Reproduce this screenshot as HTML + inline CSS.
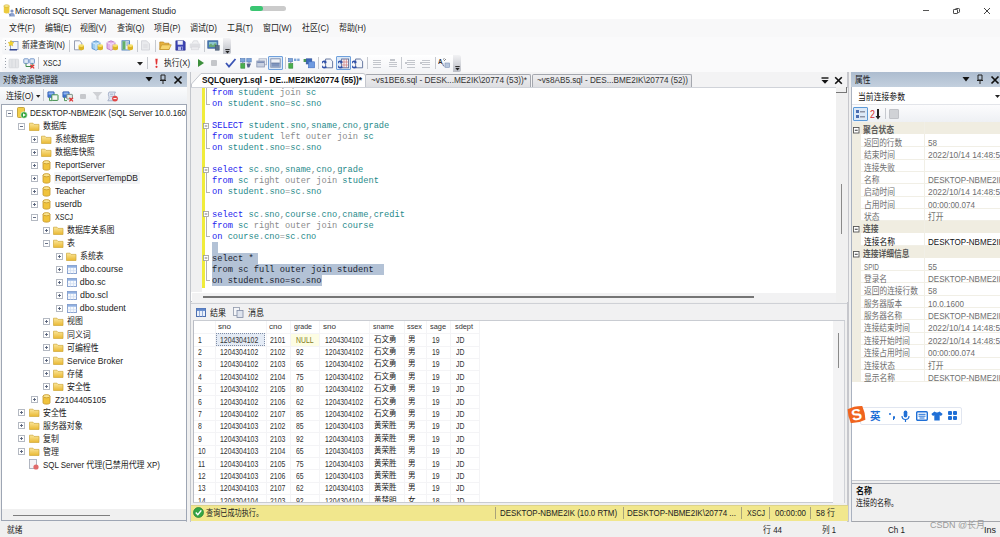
<!DOCTYPE html>
<html lang="zh"><head><meta charset="utf-8"><title>Microsoft SQL Server Management Studio</title>
<style>
*{box-sizing:border-box;margin:0;padding:0}
html,body{width:1000px;height:537px;overflow:hidden;background:#f0f0f0}
body{position:relative;font-family:"Liberation Sans","Noto Sans CJK SC",sans-serif;font-size:9px;color:#1a1a1a;line-height:1}
.a{position:absolute}
.t{position:absolute;white-space:nowrap;line-height:12px;height:12px}
.code{position:absolute;white-space:pre;font-family:"Liberation Mono","Noto Sans CJK SC",monospace;font-size:8.7px;line-height:11px;height:11px;color:#1f8a8a}
.kw{color:#2222ee}.gr{color:#8c8c8c}.bk{color:#000}
.sel{background:#b3c3d6}
</style></head><body>
<svg class="a" width="0" height="0"><defs><linearGradient id="fg" x1="0" y1="0" x2="0" y2="1"><stop offset="0" stop-color="#fbe69a"/><stop offset="1" stop-color="#e9b832"/></linearGradient></defs></svg>

<div class="a" style="left:0px;top:0px;width:1000px;height:19px;background:#fff"></div>
<svg class="a" style="left:2.5px;top:3.5px" width="13" height="13"><path d="M0.8 2V8.6Q3.5 10.4 6.4 8.6V2Z" fill="#eccb3e"/><ellipse cx="3.6" cy="2" rx="2.8" ry="1.3" fill="#f8e88a" stroke="#c9a62c" stroke-width="0.5"/><circle cx="9" cy="7" r="1.6" fill="#7d92c4"/><path d="M6 12.5Q6.4 8.8 9 8.8Q11.6 8.8 12 12.5Z" fill="#8ea3d0"/><path d="M5.6 9.6L8 11.4" stroke="#5a6a9a" stroke-width="0.8"/></svg>
<div class="t" style="left:15px;top:5px;font-size:8.8px;color:#222;transform:scaleX(0.976);transform-origin:0 50%;">Microsoft SQL Server Management Studio</div>
<div class="a" style="left:250px;top:5.7px;width:36px;height:5px;background:#cbcbcb;border-radius:3px"></div>
<div class="a" style="left:250px;top:5.7px;width:13px;height:5px;background:#3ac672;border-radius:3px"></div>
<div class="a" style="left:922.5px;top:10px;width:6.5px;height:1px;background:#555"></div>
<div class="a" style="left:953px;top:9.3px;width:5.2px;height:5.2px;border:1px solid #444;border-radius:1.3px;background:#fff"></div>
<div class="a" style="left:954.8px;top:7.8px;width:5.2px;height:5.2px;border:1px solid #444;border-radius:1.3px"></div>
<div class="a" style="left:953px;top:9.3px;width:5.2px;height:5.2px;border:1px solid #444;border-radius:1.3px;background:#fff"></div>
<svg class="a" style="left:983.3px;top:7px" width="8" height="8"><path d="M1 1L7 7M7 1L1 7" stroke="#444" stroke-width="1" fill="none"/></svg>
<div class="a" style="left:0px;top:19px;width:1000px;height:18px;background:#f8f8f9"></div>
<div class="t" style="left:9px;top:22px;font-size:8.8px;transform:scaleX(0.900);transform-origin:0 50%;">文件(F)</div>
<div class="t" style="left:45px;top:22px;font-size:8.8px;transform:scaleX(0.900);transform-origin:0 50%;">编辑(E)</div>
<div class="t" style="left:80px;top:22px;font-size:8.8px;transform:scaleX(0.900);transform-origin:0 50%;">视图(V)</div>
<div class="t" style="left:117px;top:22px;font-size:8.8px;transform:scaleX(0.900);transform-origin:0 50%;">查询(Q)</div>
<div class="t" style="left:154px;top:22px;font-size:8.8px;transform:scaleX(0.900);transform-origin:0 50%;">项目(P)</div>
<div class="t" style="left:190px;top:22px;font-size:8.8px;transform:scaleX(0.900);transform-origin:0 50%;">调试(D)</div>
<div class="t" style="left:227px;top:22px;font-size:8.8px;transform:scaleX(0.900);transform-origin:0 50%;">工具(T)</div>
<div class="t" style="left:263px;top:22px;font-size:8.8px;transform:scaleX(0.900);transform-origin:0 50%;">窗口(W)</div>
<div class="t" style="left:302px;top:22px;font-size:8.8px;transform:scaleX(0.900);transform-origin:0 50%;">社区(C)</div>
<div class="t" style="left:339px;top:22px;font-size:8.8px;transform:scaleX(0.900);transform-origin:0 50%;">帮助(H)</div>
<div class="a" style="left:0px;top:37px;width:1000px;height:35px;background:#fafafb"></div>
<div class="a" style="left:2px;top:38px;width:229px;height:16px;background:linear-gradient(#ffffff,#f3f4f7);border-radius:2px"></div>
<div class="a" style="left:2px;top:55px;width:459px;height:17px;background:linear-gradient(#ffffff,#f3f4f7);border-radius:2px"></div>
<div class="a" style="left:223px;top:38px;width:8px;height:16px;background:linear-gradient(#f2f2f4,#b9bcc4);border-radius:0 2px 2px 0"></div>
<div class="a" style="left:453px;top:55px;width:8px;height:17px;background:linear-gradient(#f2f2f4,#b9bcc4);border-radius:0 2px 2px 0"></div>
<div class="a" style="left:5px;top:40px;width:1px;height:1px;background:#9aa0aa"></div>
<div class="a" style="left:5px;top:43px;width:1px;height:1px;background:#9aa0aa"></div>
<div class="a" style="left:5px;top:46px;width:1px;height:1px;background:#9aa0aa"></div>
<div class="a" style="left:5px;top:49px;width:1px;height:1px;background:#9aa0aa"></div>
<div class="a" style="left:5px;top:58px;width:1px;height:1px;background:#9aa0aa"></div>
<div class="a" style="left:5px;top:61px;width:1px;height:1px;background:#9aa0aa"></div>
<div class="a" style="left:5px;top:64px;width:1px;height:1px;background:#9aa0aa"></div>
<div class="a" style="left:5px;top:67px;width:1px;height:1px;background:#9aa0aa"></div>
<svg class="a" style="left:8px;top:39.5px" width="12" height="11" viewBox="0 0 12 11"><rect x="2.5" y="1.5" width="7.5" height="8" fill="#f3f6fb" stroke="#8b9cc0" stroke-width="0.9"/><path d="M1.5 9.8H9" stroke="#2c3f8c" stroke-width="1.4"/><path d="M3 0.3L3.9 2.2L6 2.5L4.4 3.9L4.8 6L3 5L1.2 6L1.6 3.9L0 2.5L2.1 2.2Z" fill="#f2d52c" stroke="#d1ac1a" stroke-width="0.4"/></svg>
<div class="t" style="left:22px;top:39.3px;font-size:8.8px;transform:scaleX(0.907);transform-origin:0 50%;">新建查询(N)</div>
<div class="a" style="left:69px;top:40px;width:1px;height:12px;background:#c6c9cf"></div>
<svg class="a" style="left:73px;top:39.5px" width="12" height="11" viewBox="0 0 12 11"><path d="M1.5 0.8H6.5L8.8 3V9.8H1.5Z" fill="#f8f9fb" stroke="#8a93a8" stroke-width="0.9"/><path d="M5.6 5.6V9.2Q8.3 11.2 11 9.2V5.6Z" fill="#dcb526"/><ellipse cx="8.3" cy="5.6" rx="2.7" ry="1.3" fill="#f6e170"/></svg>
<svg class="a" style="left:91px;top:39.5px" width="13" height="11" viewBox="0 0 13 11"><path d="M1 2.5L5 0.8L9 2.5V8.5L5 10.2L1 8.5Z" fill="#9dcdf0" stroke="#4d86c6" stroke-width="0.8"/><path d="M1 2.5L5 4.2L9 2.5M5 4.2V10" stroke="#e9f4fc" stroke-width="0.8" fill="none"/><path d="M6.6 5.6V9.2Q9.3 11.2 12 9.2V5.6Z" fill="#dcb526"/><ellipse cx="9.3" cy="5.6" rx="2.7" ry="1.3" fill="#f6e170"/></svg>
<svg class="a" style="left:106px;top:39.5px" width="13" height="11" viewBox="0 0 13 11"><path d="M1 2.5L5 0.8L9 2.5V8.5L5 10.2L1 8.5Z" fill="#e3b4e8" stroke="#b26fc0" stroke-width="0.8"/><path d="M1 2.5L5 4.2L9 2.5M5 4.2V10" stroke="#f9ecfa" stroke-width="0.8" fill="none"/><path d="M6.6 5.6V9.2Q9.3 11.2 12 9.2V5.6Z" fill="#dcb526"/><ellipse cx="9.3" cy="5.6" rx="2.7" ry="1.3" fill="#f6e170"/></svg>
<svg class="a" style="left:121px;top:39.5px" width="13" height="11" viewBox="0 0 13 11"><rect x="1" y="0.8" width="7.5" height="9.2" fill="#e7f0f8" stroke="#4a7cb8" stroke-width="0.9"/><rect x="1.5" y="1.2" width="3" height="8.4" fill="#62b06a"/><path d="M5.3 3H8M5.3 5H8" stroke="#4a7cb8" stroke-width="0.8"/><path d="M6.6 5.6V9.2Q9.3 11.2 12 9.2V5.6Z" fill="#dcb526"/><ellipse cx="9.3" cy="5.6" rx="2.7" ry="1.3" fill="#f6e170"/></svg>
<div class="a" style="left:137px;top:40px;width:1px;height:12px;background:#c6c9cf"></div>
<svg class="a" style="left:140px;top:39.5px" width="12" height="11" viewBox="0 0 12 11"><path d="M1.5 0.8H6.5L9.5 3.8V10H1.5Z" fill="#e9eaed" stroke="#d2d4d9" stroke-width="0.9"/><path d="M3.2 5H7.6M3.2 7H7.6" stroke="#d4d6db" stroke-width="0.8"/></svg>
<div class="a" style="left:155px;top:40px;width:1px;height:12px;background:#c6c9cf"></div>
<svg class="a" style="left:159px;top:40px" width="13" height="11" viewBox="0 0 13 11"><path d="M0.8 2H4.5L5.5 3.2H10V9.5H0.8Z" fill="#e9b23e" stroke="#b98520" stroke-width="0.7"/><path d="M2.6 4.8H12.2L10 9.5H0.8Z" fill="#f7d56e" stroke="#c2922a" stroke-width="0.7"/></svg>
<svg class="a" style="left:175px;top:39.5px" width="11" height="11" viewBox="0 0 11 11"><path d="M0.8 0.8H9L10.2 2V10.2H0.8Z" fill="#3c44b4" stroke="#2a2f88" stroke-width="0.6"/><rect x="2.6" y="0.9" width="5.2" height="3.8" fill="#eceefa"/><rect x="3" y="6.6" width="5" height="3.6" fill="#b9bfe8"/><rect x="6" y="7.2" width="1.4" height="2.6" fill="#3c44b4"/></svg>
<svg class="a" style="left:189px;top:40px" width="12" height="11" viewBox="0 0 12 11"><path d="M3 3.5L4.5 0.8H8.5L9.5 3.5" fill="#f0f0f2" stroke="#d6d7db" stroke-width="0.7"/><rect x="0.8" y="3.5" width="10.4" height="4.8" rx="0.8" fill="#dedfe3"/><rect x="2.6" y="7" width="6.8" height="2.8" fill="#ececef" stroke="#d6d7db" stroke-width="0.6"/></svg>
<div class="a" style="left:204px;top:40px;width:1px;height:12px;background:#c6c9cf"></div>
<svg class="a" style="left:207px;top:39.5px" width="13" height="11" viewBox="0 0 13 11"><rect x="0.8" y="0.8" width="10" height="7.4" fill="#4d7fb6" stroke="#36609a" stroke-width="0.8"/><rect x="2" y="2" width="7.6" height="5" fill="#8ec6d0"/><path d="M2 5L4 3.5L6 5.5L8 3L9.6 4.6V7H2Z" fill="#6aa874"/><rect x="8.2" y="5.6" width="4" height="4.6" fill="#5a6f8a" stroke="#3d4f68" stroke-width="0.5"/></svg>
<svg class="a" style="left:225px;top:48.5px" width="5" height="5"><path d="M0.3 0.6H4.7" stroke="#222" stroke-width="1"/><path d="M0.3 2L4.7 2L2.5 4.6Z" fill="#222"/></svg>
<svg class="a" style="left:8px;top:57.5px" width="12" height="11" viewBox="0 0 12 11"><rect x="1" y="1.2" width="9.6" height="8.6" rx="0.8" fill="#e4e5e8" stroke="#d3d5da" stroke-width="0.7"/><path d="M4 1.5V9.5M7.5 1.5V9.5" stroke="#d3d5da" stroke-width="0.7"/></svg>
<svg class="a" style="left:23px;top:57.5px" width="13" height="11" viewBox="0 0 13 11"><rect x="0.8" y="0.8" width="4.6" height="4.6" rx="0.6" fill="#dfe9f6" stroke="#6b8fc6" stroke-width="0.9"/><rect x="6.8" y="0.8" width="4.6" height="4.6" rx="0.6" fill="#dfe9f6" stroke="#6b8fc6" stroke-width="0.9"/><path d="M3 5.5V8.5H9.2V5.5" stroke="#3f8a4a" stroke-width="1" fill="none"/><path d="M7.4 6.8L11.2 10.4M11.2 6.8L7.4 10.4" stroke="#e03434" stroke-width="1.3"/></svg>
<div class="a" style="left:38px;top:57px;width:1px;height:12px;background:#c6c9cf"></div>
<div class="t" style="left:43px;top:57px;font-size:8.8px;transform:scaleX(0.800);transform-origin:0 50%;">XSCJ</div>
<svg class="a" style="left:137px;top:62px" width="6" height="4"><path d="M0 0L6 0L3 3.5Z" fill="#222"/></svg>
<div class="a" style="left:147px;top:57px;width:1px;height:12px;background:#c6c9cf"></div>
<svg class="a" style="left:153.5px;top:57.5px" width="5" height="11" viewBox="0 0 5 11"><path d="M1.3 0.8H3.7L3.1 6.6H1.9Z" fill="#e23232"/><circle cx="2.5" cy="8.8" r="1.1" fill="#e23232"/></svg>
<div class="t" style="left:164px;top:57.3px;font-size:8.8px;transform:scaleX(0.887);transform-origin:0 50%;">执行(X)</div>
<svg class="a" style="left:198px;top:59px" width="6" height="8"><path d="M0 0L6 4L0 8Z" fill="#3c8f3c"/></svg>
<div class="a" style="left:211px;top:60px;width:6px;height:6px;background:#c4c6ca;border-radius:1px;"></div>
<svg class="a" style="left:225px;top:58px" width="12" height="10"><path d="M1 5L4 8.5L10.5 1" stroke="#3b55b5" stroke-width="1.8" fill="none"/></svg>
<svg class="a" style="left:239.5px;top:57.5px" width="13" height="11" viewBox="0 0 13 11"><rect x="0.6" y="0.6" width="4.4" height="3.4" fill="#7ea5d8" stroke="#4d77b6" stroke-width="0.6"/><rect x="6.8" y="0.6" width="4.4" height="3.4" fill="#7ea5d8" stroke="#4d77b6" stroke-width="0.6"/><rect x="0.8" y="5.6" width="4" height="4.6" fill="#49b04c" stroke="#2f8a34" stroke-width="0.6"/><path d="M6.6 5.4H11L9.4 9.6H7.4Z" fill="#56618c"/><path d="M2.8 4V5.5M9 4V5.4" stroke="#667" stroke-width="0.7"/></svg>
<svg class="a" style="left:255.5px;top:58px" width="12" height="10" viewBox="0 0 12 10"><rect x="3" y="0.8" width="7.6" height="6" fill="#e7ebf2" stroke="#a5aec2" stroke-width="0.8"/><rect x="0.8" y="3" width="7.6" height="6" fill="#c8d0e0" stroke="#8e99b4" stroke-width="0.8"/><rect x="1.2" y="3.4" width="6.8" height="1.6" fill="#7e8fb6"/></svg>
<div class="a" style="left:267.8px;top:56.2px;width:15px;height:14px;background:#dbe8f7;border:1px solid #6fa0dc;border-radius:1px"></div>
<svg class="a" style="left:270px;top:58px" width="11" height="10" viewBox="0 0 11 10"><rect x="0.8" y="0.8" width="9.4" height="8.4" fill="#eef2f8" stroke="#7d8cab" stroke-width="0.9"/><rect x="1.3" y="5" width="8.4" height="3.8" fill="#7f95bd"/><path d="M1.3 5H9.7" stroke="#5d7099" stroke-width="0.7"/></svg>
<div class="a" style="left:285px;top:57px;width:1px;height:12px;background:#c6c9cf"></div>
<svg class="a" style="left:288px;top:57.5px" width="13" height="11" viewBox="0 0 13 11"><rect x="0.6" y="0.6" width="4" height="3.2" fill="#7ea5d8" stroke="#4d77b6" stroke-width="0.6"/><rect x="6" y="0.6" width="2.4" height="2.4" fill="#7ea5d8"/><rect x="9.2" y="0.6" width="2.4" height="2.4" fill="#7ea5d8"/><rect x="0.8" y="5.6" width="4" height="4.6" fill="#49b04c" stroke="#2f8a34" stroke-width="0.6"/><path d="M2.8 3.8V5.5" stroke="#667" stroke-width="0.7"/></svg>
<svg class="a" style="left:302.5px;top:57.5px" width="13" height="11" viewBox="0 0 13 11"><rect x="0.6" y="1" width="3" height="3" fill="#4a9a52"/><rect x="3.2" y="0.8" width="5.6" height="5.2" fill="#3d68b8" stroke="#2c4f96" stroke-width="0.6"/><rect x="5.4" y="3.8" width="6.2" height="6" fill="#6f9be0" stroke="#3f6cc0" stroke-width="0.6"/></svg>
<div class="a" style="left:318px;top:57px;width:1px;height:12px;background:#c6c9cf"></div>
<svg class="a" style="left:321.5px;top:58px" width="12" height="11" viewBox="0 0 12 11"><path d="M3.6 1H8.4L10.6 3.2V9.8H3.6Z" fill="#f4f6fa" stroke="#5a6d98" stroke-width="0.9"/><path d="M4.2 4.2A3 3 0 1 0 4.4 8.6" fill="none" stroke="#2f4fa8" stroke-width="1.5"/><path d="M2.6 2.6L4.8 4.8L2 5.4Z" fill="#2f4fa8"/></svg>
<div class="a" style="left:335.6px;top:56.2px;width:15px;height:14px;background:#dbe8f7;border:1px solid #6fa0dc;border-radius:1px"></div>
<svg class="a" style="left:337.5px;top:58px" width="12" height="11" viewBox="0 0 12 11"><rect x="3.6" y="1" width="7" height="8.8" fill="#f4f6fa" stroke="#5a6d98" stroke-width="0.9"/><path d="M6 1V9.8M8.4 1V9.8M3.6 4H10.6M3.6 7H10.6" stroke="#c96a6a" stroke-width="0.6"/><path d="M4.2 4.2A3 3 0 1 0 4.4 8.6" fill="none" stroke="#2f4fa8" stroke-width="1.5"/><path d="M2.6 2.6L4.8 4.8L2 5.4Z" fill="#2f4fa8"/></svg>
<svg class="a" style="left:352px;top:58px" width="12" height="11" viewBox="0 0 12 11"><path d="M3.6 1H8.4L10.6 3.2V9.8H3.6Z" fill="#f4f6fa" stroke="#5a6d98" stroke-width="0.9"/><path d="M4.2 4.2A3 3 0 1 0 4.4 8.6" fill="none" stroke="#2f4fa8" stroke-width="1.5"/><path d="M2.6 2.6L4.8 4.8L2 5.4Z" fill="#2f4fa8"/></svg>
<div class="a" style="left:367px;top:57px;width:1px;height:12px;background:#c6c9cf"></div>
<div class="a" style="left:373px;top:59.5px;width:8px;height:0.9px;background:#c3c6cc"></div>
<div class="a" style="left:373px;top:61.9px;width:8px;height:0.9px;background:#c3c6cc"></div>
<div class="a" style="left:373px;top:64.3px;width:8px;height:0.9px;background:#c3c6cc"></div>
<div class="a" style="left:373px;top:66.7px;width:8px;height:0.9px;background:#c3c6cc"></div>
<div class="a" style="left:389px;top:61.5px;width:8px;height:0.9px;background:#c3c6cc"></div>
<div class="a" style="left:389px;top:63.9px;width:8px;height:0.9px;background:#c3c6cc"></div>
<div class="a" style="left:389px;top:66.3px;width:8px;height:0.9px;background:#c3c6cc"></div>
<div class="a" style="left:390px;top:58.5px;width:5px;height:2.4px;border:0.8px solid #c3c6cc"></div>
<div class="a" style="left:401px;top:57px;width:1px;height:12px;background:#c6c9cf"></div>
<div class="a" style="left:407px;top:59.5px;width:8px;height:0.9px;background:#c3c6cc"></div>
<div class="a" style="left:407px;top:61.9px;width:8px;height:0.9px;background:#c3c6cc"></div>
<div class="a" style="left:407px;top:64.3px;width:8px;height:0.9px;background:#c3c6cc"></div>
<div class="a" style="left:407px;top:66.7px;width:8px;height:0.9px;background:#c3c6cc"></div>
<div class="a" style="left:405px;top:62px;width:2px;height:2px;background:#c3c6cc"></div>
<div class="a" style="left:422px;top:59.5px;width:8px;height:0.9px;background:#c3c6cc"></div>
<div class="a" style="left:422px;top:61.9px;width:8px;height:0.9px;background:#c3c6cc"></div>
<div class="a" style="left:422px;top:64.3px;width:8px;height:0.9px;background:#c3c6cc"></div>
<div class="a" style="left:422px;top:66.7px;width:8px;height:0.9px;background:#c3c6cc"></div>
<div class="a" style="left:420px;top:62px;width:2px;height:2px;background:#c3c6cc"></div>
<div class="a" style="left:435px;top:57px;width:1px;height:12px;background:#c6c9cf"></div>
<div class="t" style="left:438px;top:55.5px;font-size:7px;font-weight:bold;color:#333;transform:scaleX(0.900);transform-origin:0 50%;">A</div>
<svg class="a" style="left:442px;top:58px" width="9" height="11" viewBox="0 0 9 11"><path d="M1 1.5L2.5 0.5M2 3L4 1" stroke="#555" stroke-width="0.7"/><rect x="3" y="5" width="4.6" height="4.4" fill="#b7c6dc" stroke="#7f93b6" stroke-width="0.6"/><path d="M0.8 5.4Q0.4 8 2.4 8.2" stroke="#4a5a8a" stroke-width="0.8" fill="none"/></svg>
<svg class="a" style="left:455px;top:65.5px" width="5" height="5"><path d="M0.3 0.6H4.7" stroke="#222" stroke-width="1"/><path d="M0.3 2L4.7 2L2.5 4.6Z" fill="#222"/></svg>
<div class="a" style="left:0px;top:72px;width:187px;height:450px;background:#f0f0f0;border-right:1px solid #b8bcc4"></div>
<div class="a" style="left:0px;top:72px;width:187px;height:15px;background:linear-gradient(#adbccf,#c3d0de)"></div>
<div class="t" style="left:3px;top:73.5px;font-size:8.8px;color:#1a1a1a;transform:scaleX(0.893);transform-origin:0 50%;">对象资源管理器</div>
<svg class="a" style="left:145px;top:76px" width="8" height="6"><path d="M0.5 1L7.5 1L4 5.5Z" fill="#111"/></svg>
<svg class="a" style="left:159px;top:74px" width="8" height="11"><path d="M2 1H6V6H2ZM1 6.5H7M4 6.5V10" stroke="#222" stroke-width="1" fill="none"/></svg>
<svg class="a" style="left:173px;top:75px" width="10" height="10"><path d="M1.5 1.5L8.5 8.5M8.5 1.5L1.5 8.5" stroke="#111" stroke-width="1.7" fill="none"/></svg>
<div class="a" style="left:0px;top:87px;width:187px;height:17px;background:linear-gradient(#fbfcfd,#eceff3)"></div>
<div class="t" style="left:6px;top:89.7px;font-size:8.8px;transform:scaleX(0.908);transform-origin:0 50%;">连接(O)</div>
<svg class="a" style="left:35.5px;top:95px" width="5" height="3"><path d="M0 0L4.4 0L2.2 2.8Z" fill="#222"/></svg>
<div class="a" style="left:42.5px;top:89px;width:1px;height:12px;background:#c6c9cf"></div>
<svg class="a" style="left:47px;top:90.5px" width="12" height="11" viewBox="0 0 12 11"><rect x="0.8" y="0.8" width="6.4" height="5.6" rx="0.6" fill="#3f74d0" stroke="#2b55a6" stroke-width="0.6"/><rect x="1.6" y="1.5" width="4.8" height="2" fill="#8fb4ee"/><rect x="4.8" y="3.8" width="6.2" height="5.6" rx="0.5" fill="#f4f8f4" stroke="#3f8f4a" stroke-width="1"/><path d="M2.5 6.5V9.6H5" stroke="#3f8f4a" stroke-width="0.9" fill="none"/></svg>
<svg class="a" style="left:62px;top:90.5px" width="12" height="11" viewBox="0 0 12 11"><rect x="0.8" y="0.8" width="6.4" height="5.6" rx="0.6" fill="#3f74d0" stroke="#2b55a6" stroke-width="0.6"/><rect x="1.6" y="1.5" width="4.8" height="2" fill="#8fb4ee"/><rect x="4.8" y="3.4" width="5.6" height="4.6" rx="0.5" fill="#e6ece8" stroke="#6f8a7c" stroke-width="0.9"/><path d="M2.5 6.5V9.6H5" stroke="#3f8f4a" stroke-width="0.9" fill="none"/><path d="M7.4 6.8L11 10.4M11 6.8L7.4 10.4" stroke="#e03434" stroke-width="1.3"/></svg>
<div class="a" style="left:80.3px;top:93.8px;width:5.4px;height:5.4px;background:#c6c8cc;border-radius:1px;"></div>
<svg class="a" style="left:92px;top:91px" width="11" height="10" viewBox="0 0 11 10"><path d="M0.6 1H10.4L6.6 5.2V9.2L4.4 8V5.2Z" fill="#cfd1d5"/></svg>
<svg class="a" style="left:107px;top:90.5px" width="12" height="11" viewBox="0 0 12 11"><path d="M2 1H8.5Q6.5 3 8 5.4Q9 7.6 7 9.8H0.8Q2.8 7.6 1.8 5.4Q0.6 3 2 1Z" fill="#dfe5f0" stroke="#8f9dbb" stroke-width="0.7"/><path d="M3 3.2H6M3.4 5.4H6.6" stroke="#8f9dbb" stroke-width="0.7"/><circle cx="8" cy="7.6" r="2.9" fill="#e04848"/><path d="M6.4 7.6H9.6" stroke="#fff" stroke-width="1"/></svg>
<div class="a" style="left:1px;top:104px;width:186px;height:405px;background:#fff;border:1px solid #9ea6b4;border-bottom:none"></div>
<div class="a" style="left:1px;top:509px;width:186px;height:12px;background:#f0f0f0;border:1px solid #9ea6b4;border-top:none"></div>
<div class="a" style="left:13px;top:514.5px;width:97px;height:1px;background:#7e7e7e"></div>
<div class="a" style="left:2px;top:105px;width:184px;height:404px;overflow:hidden">
<svg class="a" style="left:4px;top:4.5px" width="7" height="7"><rect x="0.5" y="0.5" width="6" height="6" fill="#fff" stroke="#b4b9c2"/><path d="M2 3.5H5" stroke="#556078" stroke-width="0.9"/></svg>
<svg class="a" style="left:15px;top:2px" width="11" height="12"><rect x="0.5" y="0.5" width="7" height="10" rx="1" fill="#f2cf4a" stroke="#b9952a" stroke-width="0.8"/><circle cx="7" cy="8" r="3.3" fill="#2fa43a" stroke="#fff" stroke-width="0.6"/><path d="M6 6.3L8.8 8L6 9.7Z" fill="#fff"/></svg>
<div class="t" style="left:28.4px;top:2px;font-size:8.8px;color:#222;transform:scaleX(0.912);transform-origin:0 50%;">DESKTOP-NBME2IK (SQL Server 10.0.160</div>
<svg class="a" style="left:16.4px;top:17.53px" width="7" height="7"><rect x="0.5" y="0.5" width="6" height="6" fill="#fff" stroke="#b4b9c2"/><path d="M2 3.5H5" stroke="#556078" stroke-width="0.9"/></svg>
<svg class="a" style="left:26.6px;top:16.53px" width="11" height="9"><path d="M0.5 1.2H4L5 2.4H10V8.5H0.5Z" fill="url(#fg)" stroke="#cfa838" stroke-width="0.7"/></svg>
<div class="t" style="left:40.6px;top:15.03px;font-size:8.8px;color:#222;transform:scaleX(0.900);transform-origin:0 50%;">数据库</div>
<svg class="a" style="left:28.8px;top:30.56px" width="7" height="7"><rect x="0.5" y="0.5" width="6" height="6" fill="#fff" stroke="#b4b9c2"/><path d="M2 3.5H5M3.5 2V5" stroke="#556078" stroke-width="0.9"/></svg>
<svg class="a" style="left:39px;top:29.56px" width="11" height="9"><path d="M0.5 1.2H4L5 2.4H10V8.5H0.5Z" fill="url(#fg)" stroke="#cfa838" stroke-width="0.7"/></svg>
<div class="t" style="left:53px;top:28.06px;font-size:8.8px;color:#222;transform:scaleX(0.900);transform-origin:0 50%;">系统数据库</div>
<svg class="a" style="left:28.8px;top:43.59px" width="7" height="7"><rect x="0.5" y="0.5" width="6" height="6" fill="#fff" stroke="#b4b9c2"/><path d="M2 3.5H5M3.5 2V5" stroke="#556078" stroke-width="0.9"/></svg>
<svg class="a" style="left:39px;top:42.59px" width="11" height="9"><path d="M0.5 1.2H4L5 2.4H10V8.5H0.5Z" fill="url(#fg)" stroke="#cfa838" stroke-width="0.7"/></svg>
<div class="t" style="left:53px;top:41.09px;font-size:8.8px;color:#222;transform:scaleX(0.900);transform-origin:0 50%;">数据库快照</div>
<svg class="a" style="left:28.8px;top:56.62px" width="7" height="7"><rect x="0.5" y="0.5" width="6" height="6" fill="#fff" stroke="#b4b9c2"/><path d="M2 3.5H5M3.5 2V5" stroke="#556078" stroke-width="0.9"/></svg>
<svg class="a" style="left:39.8px;top:54.62px" width="9" height="11"><path d="M1 2.2V8.8C1 10.6 8 10.6 8 8.8V2.2" fill="#f0c33c" stroke="#c4962a" stroke-width="0.8"/><ellipse cx="4.5" cy="2.2" rx="3.5" ry="1.6" fill="#fbe48e" stroke="#c4962a" stroke-width="0.8"/></svg>
<div class="t" style="left:53px;top:54.12px;font-size:8.8px;color:#222;transform:scaleX(0.956);transform-origin:0 50%;">ReportServer</div>
<svg class="a" style="left:28.8px;top:69.65px" width="7" height="7"><rect x="0.5" y="0.5" width="6" height="6" fill="#fff" stroke="#b4b9c2"/><path d="M2 3.5H5M3.5 2V5" stroke="#556078" stroke-width="0.9"/></svg>
<svg class="a" style="left:39.8px;top:67.65px" width="9" height="11"><path d="M1 2.2V8.8C1 10.6 8 10.6 8 8.8V2.2" fill="#f0c33c" stroke="#c4962a" stroke-width="0.8"/><ellipse cx="4.5" cy="2.2" rx="3.5" ry="1.6" fill="#fbe48e" stroke="#c4962a" stroke-width="0.8"/></svg>
<div class="a" style="left:51.5px;top:67.15px;width:86px;height:12px;background:#f3f4f6;border-radius:1px"></div>
<div class="t" style="left:53px;top:67.15px;font-size:8.8px;color:#222;transform:scaleX(0.965);transform-origin:0 50%;">ReportServerTempDB</div>
<svg class="a" style="left:28.8px;top:82.68px" width="7" height="7"><rect x="0.5" y="0.5" width="6" height="6" fill="#fff" stroke="#b4b9c2"/><path d="M2 3.5H5M3.5 2V5" stroke="#556078" stroke-width="0.9"/></svg>
<svg class="a" style="left:39.8px;top:80.68px" width="9" height="11"><path d="M1 2.2V8.8C1 10.6 8 10.6 8 8.8V2.2" fill="#f0c33c" stroke="#c4962a" stroke-width="0.8"/><ellipse cx="4.5" cy="2.2" rx="3.5" ry="1.6" fill="#fbe48e" stroke="#c4962a" stroke-width="0.8"/></svg>
<div class="t" style="left:53px;top:80.18px;font-size:8.8px;color:#222;transform:scaleX(0.959);transform-origin:0 50%;">Teacher</div>
<svg class="a" style="left:28.8px;top:95.71px" width="7" height="7"><rect x="0.5" y="0.5" width="6" height="6" fill="#fff" stroke="#b4b9c2"/><path d="M2 3.5H5M3.5 2V5" stroke="#556078" stroke-width="0.9"/></svg>
<svg class="a" style="left:39.8px;top:93.71px" width="9" height="11"><path d="M1 2.2V8.8C1 10.6 8 10.6 8 8.8V2.2" fill="#f0c33c" stroke="#c4962a" stroke-width="0.8"/><ellipse cx="4.5" cy="2.2" rx="3.5" ry="1.6" fill="#fbe48e" stroke="#c4962a" stroke-width="0.8"/></svg>
<div class="t" style="left:53px;top:93.21px;font-size:8.8px;color:#222;">userdb</div>
<svg class="a" style="left:28.8px;top:108.74px" width="7" height="7"><rect x="0.5" y="0.5" width="6" height="6" fill="#fff" stroke="#b4b9c2"/><path d="M2 3.5H5" stroke="#556078" stroke-width="0.9"/></svg>
<svg class="a" style="left:39.8px;top:106.74px" width="9" height="11"><path d="M1 2.2V8.8C1 10.6 8 10.6 8 8.8V2.2" fill="#f0c33c" stroke="#c4962a" stroke-width="0.8"/><ellipse cx="4.5" cy="2.2" rx="3.5" ry="1.6" fill="#fbe48e" stroke="#c4962a" stroke-width="0.8"/></svg>
<div class="t" style="left:53px;top:106.24px;font-size:8.8px;color:#222;transform:scaleX(0.800);transform-origin:0 50%;">XSCJ</div>
<svg class="a" style="left:41.2px;top:121.77px" width="7" height="7"><rect x="0.5" y="0.5" width="6" height="6" fill="#fff" stroke="#b4b9c2"/><path d="M2 3.5H5M3.5 2V5" stroke="#556078" stroke-width="0.9"/></svg>
<svg class="a" style="left:51.4px;top:120.77px" width="11" height="9"><path d="M0.5 1.2H4L5 2.4H10V8.5H0.5Z" fill="url(#fg)" stroke="#cfa838" stroke-width="0.7"/></svg>
<div class="t" style="left:65.4px;top:119.27px;font-size:8.8px;color:#222;transform:scaleX(0.900);transform-origin:0 50%;">数据库关系图</div>
<svg class="a" style="left:41.2px;top:134.8px" width="7" height="7"><rect x="0.5" y="0.5" width="6" height="6" fill="#fff" stroke="#b4b9c2"/><path d="M2 3.5H5" stroke="#556078" stroke-width="0.9"/></svg>
<svg class="a" style="left:51.4px;top:133.8px" width="11" height="9"><path d="M0.5 1.2H4L5 2.4H10V8.5H0.5Z" fill="url(#fg)" stroke="#cfa838" stroke-width="0.7"/></svg>
<div class="t" style="left:65.4px;top:132.3px;font-size:8.8px;color:#222;transform:scaleX(0.900);transform-origin:0 50%;">表</div>
<svg class="a" style="left:53.6px;top:147.83px" width="7" height="7"><rect x="0.5" y="0.5" width="6" height="6" fill="#fff" stroke="#b4b9c2"/><path d="M2 3.5H5M3.5 2V5" stroke="#556078" stroke-width="0.9"/></svg>
<svg class="a" style="left:63.8px;top:146.83px" width="11" height="9"><path d="M0.5 1.2H4L5 2.4H10V8.5H0.5Z" fill="url(#fg)" stroke="#cfa838" stroke-width="0.7"/></svg>
<div class="t" style="left:77.8px;top:145.33px;font-size:8.8px;color:#222;transform:scaleX(0.900);transform-origin:0 50%;">系统表</div>
<svg class="a" style="left:53.6px;top:160.86px" width="7" height="7"><rect x="0.5" y="0.5" width="6" height="6" fill="#fff" stroke="#b4b9c2"/><path d="M2 3.5H5M3.5 2V5" stroke="#556078" stroke-width="0.9"/></svg>
<svg class="a" style="left:64.6px;top:159.86px" width="10" height="9"><rect x="0.5" y="0.5" width="9" height="8" fill="#f6f9fd" stroke="#7f9bcc" stroke-width="0.9"/><rect x="0.9" y="0.9" width="8.2" height="1.8" fill="#8fb0e2"/><path d="M3.5 3V8.5M6.5 3V8.5M0.5 5.7H9.5" stroke="#cfdcf0" stroke-width="0.7"/></svg>
<div class="t" style="left:77.8px;top:158.36px;font-size:8.8px;color:#222;transform:scaleX(0.988);transform-origin:0 50%;">dbo.course</div>
<svg class="a" style="left:53.6px;top:173.89px" width="7" height="7"><rect x="0.5" y="0.5" width="6" height="6" fill="#fff" stroke="#b4b9c2"/><path d="M2 3.5H5M3.5 2V5" stroke="#556078" stroke-width="0.9"/></svg>
<svg class="a" style="left:64.6px;top:172.89px" width="10" height="9"><rect x="0.5" y="0.5" width="9" height="8" fill="#f6f9fd" stroke="#7f9bcc" stroke-width="0.9"/><rect x="0.9" y="0.9" width="8.2" height="1.8" fill="#8fb0e2"/><path d="M3.5 3V8.5M6.5 3V8.5M0.5 5.7H9.5" stroke="#cfdcf0" stroke-width="0.7"/></svg>
<div class="t" style="left:77.8px;top:171.39px;font-size:8.8px;color:#222;">dbo.sc</div>
<svg class="a" style="left:53.6px;top:186.92px" width="7" height="7"><rect x="0.5" y="0.5" width="6" height="6" fill="#fff" stroke="#b4b9c2"/><path d="M2 3.5H5M3.5 2V5" stroke="#556078" stroke-width="0.9"/></svg>
<svg class="a" style="left:64.6px;top:185.92px" width="10" height="9"><rect x="0.5" y="0.5" width="9" height="8" fill="#f6f9fd" stroke="#7f9bcc" stroke-width="0.9"/><rect x="0.9" y="0.9" width="8.2" height="1.8" fill="#8fb0e2"/><path d="M3.5 3V8.5M6.5 3V8.5M0.5 5.7H9.5" stroke="#cfdcf0" stroke-width="0.7"/></svg>
<div class="t" style="left:77.8px;top:184.42px;font-size:8.8px;color:#222;transform:scaleX(1.004);transform-origin:0 50%;">dbo.scl</div>
<svg class="a" style="left:53.6px;top:199.95px" width="7" height="7"><rect x="0.5" y="0.5" width="6" height="6" fill="#fff" stroke="#b4b9c2"/><path d="M2 3.5H5M3.5 2V5" stroke="#556078" stroke-width="0.9"/></svg>
<svg class="a" style="left:64.6px;top:198.95px" width="10" height="9"><rect x="0.5" y="0.5" width="9" height="8" fill="#f6f9fd" stroke="#7f9bcc" stroke-width="0.9"/><rect x="0.9" y="0.9" width="8.2" height="1.8" fill="#8fb0e2"/><path d="M3.5 3V8.5M6.5 3V8.5M0.5 5.7H9.5" stroke="#cfdcf0" stroke-width="0.7"/></svg>
<div class="t" style="left:77.8px;top:197.45px;font-size:8.8px;color:#222;">dbo.student</div>
<svg class="a" style="left:41.2px;top:212.98px" width="7" height="7"><rect x="0.5" y="0.5" width="6" height="6" fill="#fff" stroke="#b4b9c2"/><path d="M2 3.5H5M3.5 2V5" stroke="#556078" stroke-width="0.9"/></svg>
<svg class="a" style="left:51.4px;top:211.98px" width="11" height="9"><path d="M0.5 1.2H4L5 2.4H10V8.5H0.5Z" fill="url(#fg)" stroke="#cfa838" stroke-width="0.7"/></svg>
<div class="t" style="left:65.4px;top:210.48px;font-size:8.8px;color:#222;transform:scaleX(0.900);transform-origin:0 50%;">视图</div>
<svg class="a" style="left:41.2px;top:226.01px" width="7" height="7"><rect x="0.5" y="0.5" width="6" height="6" fill="#fff" stroke="#b4b9c2"/><path d="M2 3.5H5M3.5 2V5" stroke="#556078" stroke-width="0.9"/></svg>
<svg class="a" style="left:51.4px;top:225.01px" width="11" height="9"><path d="M0.5 1.2H4L5 2.4H10V8.5H0.5Z" fill="url(#fg)" stroke="#cfa838" stroke-width="0.7"/></svg>
<div class="t" style="left:65.4px;top:223.51px;font-size:8.8px;color:#222;transform:scaleX(0.900);transform-origin:0 50%;">同义词</div>
<svg class="a" style="left:41.2px;top:239.04px" width="7" height="7"><rect x="0.5" y="0.5" width="6" height="6" fill="#fff" stroke="#b4b9c2"/><path d="M2 3.5H5M3.5 2V5" stroke="#556078" stroke-width="0.9"/></svg>
<svg class="a" style="left:51.4px;top:238.04px" width="11" height="9"><path d="M0.5 1.2H4L5 2.4H10V8.5H0.5Z" fill="url(#fg)" stroke="#cfa838" stroke-width="0.7"/></svg>
<div class="t" style="left:65.4px;top:236.54px;font-size:8.8px;color:#222;transform:scaleX(0.900);transform-origin:0 50%;">可编程性</div>
<svg class="a" style="left:41.2px;top:252.07px" width="7" height="7"><rect x="0.5" y="0.5" width="6" height="6" fill="#fff" stroke="#b4b9c2"/><path d="M2 3.5H5M3.5 2V5" stroke="#556078" stroke-width="0.9"/></svg>
<svg class="a" style="left:51.4px;top:251.07px" width="11" height="9"><path d="M0.5 1.2H4L5 2.4H10V8.5H0.5Z" fill="url(#fg)" stroke="#cfa838" stroke-width="0.7"/></svg>
<div class="t" style="left:65.4px;top:249.57px;font-size:8.8px;color:#222;transform:scaleX(0.971);transform-origin:0 50%;">Service Broker</div>
<svg class="a" style="left:41.2px;top:265.1px" width="7" height="7"><rect x="0.5" y="0.5" width="6" height="6" fill="#fff" stroke="#b4b9c2"/><path d="M2 3.5H5M3.5 2V5" stroke="#556078" stroke-width="0.9"/></svg>
<svg class="a" style="left:51.4px;top:264.1px" width="11" height="9"><path d="M0.5 1.2H4L5 2.4H10V8.5H0.5Z" fill="url(#fg)" stroke="#cfa838" stroke-width="0.7"/></svg>
<div class="t" style="left:65.4px;top:262.6px;font-size:8.8px;color:#222;transform:scaleX(0.900);transform-origin:0 50%;">存储</div>
<svg class="a" style="left:41.2px;top:278.13px" width="7" height="7"><rect x="0.5" y="0.5" width="6" height="6" fill="#fff" stroke="#b4b9c2"/><path d="M2 3.5H5M3.5 2V5" stroke="#556078" stroke-width="0.9"/></svg>
<svg class="a" style="left:51.4px;top:277.13px" width="11" height="9"><path d="M0.5 1.2H4L5 2.4H10V8.5H0.5Z" fill="url(#fg)" stroke="#cfa838" stroke-width="0.7"/></svg>
<div class="t" style="left:65.4px;top:275.63px;font-size:8.8px;color:#222;transform:scaleX(0.900);transform-origin:0 50%;">安全性</div>
<svg class="a" style="left:28.8px;top:291.16px" width="7" height="7"><rect x="0.5" y="0.5" width="6" height="6" fill="#fff" stroke="#b4b9c2"/><path d="M2 3.5H5M3.5 2V5" stroke="#556078" stroke-width="0.9"/></svg>
<svg class="a" style="left:39.8px;top:289.16px" width="9" height="11"><path d="M1 2.2V8.8C1 10.6 8 10.6 8 8.8V2.2" fill="#f0c33c" stroke="#c4962a" stroke-width="0.8"/><ellipse cx="4.5" cy="2.2" rx="3.5" ry="1.6" fill="#fbe48e" stroke="#c4962a" stroke-width="0.8"/></svg>
<div class="t" style="left:53px;top:288.66px;font-size:8.8px;color:#222;transform:scaleX(0.939);transform-origin:0 50%;">Z2104405105</div>
<svg class="a" style="left:16.4px;top:304.19px" width="7" height="7"><rect x="0.5" y="0.5" width="6" height="6" fill="#fff" stroke="#b4b9c2"/><path d="M2 3.5H5M3.5 2V5" stroke="#556078" stroke-width="0.9"/></svg>
<svg class="a" style="left:26.6px;top:303.19px" width="11" height="9"><path d="M0.5 1.2H4L5 2.4H10V8.5H0.5Z" fill="url(#fg)" stroke="#cfa838" stroke-width="0.7"/></svg>
<div class="t" style="left:40.6px;top:301.69px;font-size:8.8px;color:#222;transform:scaleX(0.900);transform-origin:0 50%;">安全性</div>
<svg class="a" style="left:16.4px;top:317.22px" width="7" height="7"><rect x="0.5" y="0.5" width="6" height="6" fill="#fff" stroke="#b4b9c2"/><path d="M2 3.5H5M3.5 2V5" stroke="#556078" stroke-width="0.9"/></svg>
<svg class="a" style="left:26.6px;top:316.22px" width="11" height="9"><path d="M0.5 1.2H4L5 2.4H10V8.5H0.5Z" fill="url(#fg)" stroke="#cfa838" stroke-width="0.7"/></svg>
<div class="t" style="left:40.6px;top:314.72px;font-size:8.8px;color:#222;transform:scaleX(0.900);transform-origin:0 50%;">服务器对象</div>
<svg class="a" style="left:16.4px;top:330.25px" width="7" height="7"><rect x="0.5" y="0.5" width="6" height="6" fill="#fff" stroke="#b4b9c2"/><path d="M2 3.5H5M3.5 2V5" stroke="#556078" stroke-width="0.9"/></svg>
<svg class="a" style="left:26.6px;top:329.25px" width="11" height="9"><path d="M0.5 1.2H4L5 2.4H10V8.5H0.5Z" fill="url(#fg)" stroke="#cfa838" stroke-width="0.7"/></svg>
<div class="t" style="left:40.6px;top:327.75px;font-size:8.8px;color:#222;transform:scaleX(0.900);transform-origin:0 50%;">复制</div>
<svg class="a" style="left:16.4px;top:343.28px" width="7" height="7"><rect x="0.5" y="0.5" width="6" height="6" fill="#fff" stroke="#b4b9c2"/><path d="M2 3.5H5M3.5 2V5" stroke="#556078" stroke-width="0.9"/></svg>
<svg class="a" style="left:26.6px;top:342.28px" width="11" height="9"><path d="M0.5 1.2H4L5 2.4H10V8.5H0.5Z" fill="url(#fg)" stroke="#cfa838" stroke-width="0.7"/></svg>
<div class="t" style="left:40.6px;top:340.78px;font-size:8.8px;color:#222;transform:scaleX(0.900);transform-origin:0 50%;">管理</div>
<svg class="a" style="left:27.4px;top:354.31px" width="10" height="11"><rect x="0.5" y="0.5" width="7" height="9" fill="#f4f4f6" stroke="#a0a6b4" stroke-width="0.8"/><circle cx="7" cy="8" r="2.6" fill="#e06a6a"/></svg>
<div class="t" style="left:40.6px;top:353.81px;font-size:8.8px;color:#222;transform:scaleX(0.902);transform-origin:0 50%;">SQL Server 代理(已禁用代理 XP)</div>
</div>
<div class="a" style="left:190px;top:72px;width:658.5px;height:450px;background:#f0f0f0;border-left:1px solid #c3c6cc;border-right:2px solid #c6c7cc"></div>
<div class="a" style="left:191px;top:72px;width:655.5px;height:15px;background:#f3f3f4"></div>
<div class="a" style="left:365px;top:74px;width:166px;height:13px;background:linear-gradient(#eeeef0,#dedfe2);border:1px solid #a4a7ae;border-bottom:none;border-radius:2px 2px 0 0"></div>
<div class="a" style="left:532px;top:74px;width:160px;height:13px;background:linear-gradient(#eeeef0,#dedfe2);border:1px solid #a4a7ae;border-bottom:none;border-radius:2px 2px 0 0"></div>
<svg class="a" style="left:191px;top:72px" width="176" height="16"><path d="M0.5 16V12L10 1.5H172Q174.5 1.5 174.5 4V16" fill="#fff" stroke="#c3c6cd"/></svg>
<div class="t" style="left:202px;top:73.5px;font-size:8.8px;font-weight:bold;color:#111;transform:scaleX(0.946);transform-origin:0 50%;">SQLQuery1.sql - DE...ME2IK\20774 (55))*</div>
<div class="t" style="left:370.7px;top:74px;font-size:8.4px;color:#333;transform:scaleX(0.987);transform-origin:0 50%;">~vs1BE6.sql - DESK...ME2IK\20774 (53))*</div>
<div class="t" style="left:537px;top:74px;font-size:8.4px;color:#333;transform:scaleX(0.976);transform-origin:0 50%;">~vs8AB5.sql - DES...BME2IK\20774 (52))</div>
<svg class="a" style="left:821px;top:77px" width="8" height="7"><path d="M0.5 1H7.5" stroke="#111" stroke-width="1.4"/><path d="M0.5 3L7.5 3L4 6.8Z" fill="#111"/></svg>
<svg class="a" style="left:834px;top:76px" width="9" height="9"><path d="M1.2 1.2L7.8 7.8M7.8 1.2L1.2 7.8" stroke="#111" stroke-width="1.6" fill="none"/></svg>
<div class="a" style="left:191px;top:87px;width:655.5px;height:215px;background:#fff;border-top:1px solid #d0d3d9;border-bottom:1px solid #b9bcc3"></div>
<div class="a" style="left:191px;top:88px;width:11px;height:204px;background:#f0f0f1"></div>
<div class="a" style="left:202px;top:88px;width:3.4px;height:200px;background:#f0ec3a"></div>
<div class="a" style="left:836px;top:88px;width:12px;height:214px;background:#f0f0f0"></div>
<div class="a" style="left:836px;top:87px;width:11px;height:6px;background:#f0f0f0;border-right:1px solid #777;border-bottom:1px solid #777"></div>
<div class="a" style="left:840.5px;top:184px;width:1.3px;height:49.5px;background:#8a8a8a"></div>
<div class="a" style="left:192px;top:292.5px;width:644px;height:9px;background:#f2f2f3"></div>
<div class="a" style="left:203px;top:296.4px;width:551px;height:1.3px;background:#757575"></div>
<div class="a" style="left:212px;top:241.56px;width:5.5px;height:11.14px;background:#b3c2d6"></div>
<div class="a" style="left:212px;top:252.6px;width:46px;height:11.14px;background:#b3c2d6"></div>
<div class="a" style="left:212px;top:263.64px;width:172px;height:11.14px;background:#b3c2d6"></div>
<div class="a" style="left:212px;top:274.68px;width:110px;height:11.14px;background:#b3c2d6"></div>
<div class="code" style="left:212px;top:88.1px;"><span class="kw">from</span> student <span class="gr">join</span> sc</div>
<div class="code" style="left:212px;top:99.14px;"><span class="kw">on</span> student<span class="gr">.</span>sno<span class="gr">=</span>sc<span class="gr">.</span>sno</div>
<div class="code" style="left:212px;top:121.22px;"><span class="kw">SELECT</span> student<span class="gr">.</span>sno<span class="gr">,</span>sname<span class="gr">,</span>cno<span class="gr">,</span>grade</div>
<div class="code" style="left:212px;top:132.26px;"><span class="kw">from</span> student <span class="gr">left outer join</span> sc</div>
<div class="code" style="left:212px;top:143.3px;"><span class="kw">on</span> student<span class="gr">.</span>sno<span class="gr">=</span>sc<span class="gr">.</span>sno</div>
<div class="code" style="left:212px;top:165.38px;"><span class="kw">select</span> sc<span class="gr">.</span>sno<span class="gr">,</span>sname<span class="gr">,</span>cno<span class="gr">,</span>grade</div>
<div class="code" style="left:212px;top:176.42px;"><span class="kw">from</span> sc <span class="gr">right outer join</span> student</div>
<div class="code" style="left:212px;top:187.46px;"><span class="kw">on</span> student<span class="gr">.</span>sno<span class="gr">=</span>sc<span class="gr">.</span>sno</div>
<div class="code" style="left:212px;top:209.54px;"><span class="kw">select</span> sc<span class="gr">.</span>sno<span class="gr">,</span>course<span class="gr">.</span>cno<span class="gr">,</span>cname<span class="gr">,</span>credit</div>
<div class="code" style="left:212px;top:220.58px;"><span class="kw">from</span> sc <span class="gr">right outer join</span> course</div>
<div class="code" style="left:212px;top:231.62px;"><span class="kw">on</span> course<span class="gr">.</span>cno<span class="gr">=</span>sc<span class="gr">.</span>cno</div>
<div class="code" style="left:212px;top:253.7px;color:#1c2530">select *</div>
<div class="code" style="left:212px;top:264.74px;color:#1c2530">from sc full outer join student</div>
<div class="code" style="left:212px;top:275.78px;color:#1c2530">on student.sno=sc.sno</div>
<svg class="a" style="left:203.2px;top:122.64px" width="6" height="6"><rect x="0.5" y="0.5" width="5" height="5" fill="#fff" stroke="#9a9a9a" stroke-width="0.8"/><path d="M1.7 3H4.3" stroke="#555" stroke-width="0.8"/></svg>
<div class="a" style="left:205.8px;top:128.64px;width:0.8px;height:19.08px;background:#b4b4b4"></div>
<div class="a" style="left:205.8px;top:147.72px;width:4px;height:0.8px;background:#b4b4b4"></div>
<svg class="a" style="left:203.2px;top:166.8px" width="6" height="6"><rect x="0.5" y="0.5" width="5" height="5" fill="#fff" stroke="#9a9a9a" stroke-width="0.8"/><path d="M1.7 3H4.3" stroke="#555" stroke-width="0.8"/></svg>
<div class="a" style="left:205.8px;top:172.8px;width:0.8px;height:19.08px;background:#b4b4b4"></div>
<div class="a" style="left:205.8px;top:191.88px;width:4px;height:0.8px;background:#b4b4b4"></div>
<svg class="a" style="left:203.2px;top:210.96px" width="6" height="6"><rect x="0.5" y="0.5" width="5" height="5" fill="#fff" stroke="#9a9a9a" stroke-width="0.8"/><path d="M1.7 3H4.3" stroke="#555" stroke-width="0.8"/></svg>
<div class="a" style="left:205.8px;top:216.96px;width:0.8px;height:19.08px;background:#b4b4b4"></div>
<div class="a" style="left:205.8px;top:236.04px;width:4px;height:0.8px;background:#b4b4b4"></div>
<svg class="a" style="left:203.2px;top:255.12px" width="6" height="6"><rect x="0.5" y="0.5" width="5" height="5" fill="#fff" stroke="#9a9a9a" stroke-width="0.8"/><path d="M1.7 3H4.3" stroke="#555" stroke-width="0.8"/></svg>
<div class="a" style="left:205.8px;top:261.12px;width:0.8px;height:19.08px;background:#b4b4b4"></div>
<div class="a" style="left:205.8px;top:280.2px;width:4px;height:0.8px;background:#b4b4b4"></div>
<div class="a" style="left:205.8px;top:88px;width:0.8px;height:15.56px;background:#b4b4b4"></div>
<div class="a" style="left:205.8px;top:103.56px;width:4px;height:0.8px;background:#b4b4b4"></div>
<div class="a" style="left:191px;top:303px;width:655.5px;height:18px;background:#f1f1f2;border-top:1px solid #cfd1d6"></div>
<svg class="a" style="left:196px;top:308px" width="10" height="9"><rect x="0.5" y="0.5" width="9" height="8" fill="#eaf0fa" stroke="#4c6fb0"/><rect x="0.5" y="0.5" width="9" height="2.4" fill="#5f86c9"/><path d="M3.5 3V8.5M6.5 3V8.5" stroke="#8aa5d6" stroke-width="0.9"/></svg>
<div class="t" style="left:210px;top:307px;font-size:8.8px;color:#111;transform:scaleX(0.909);transform-origin:0 50%;">结果</div>
<svg class="a" style="left:233px;top:307px" width="11" height="11"><rect x="0.5" y="0.5" width="6" height="8" fill="#f4f5f8" stroke="#8f98ab" stroke-width="0.8"/><rect x="4" y="3.5" width="6" height="7" fill="#dfe4ee" stroke="#7f8aa3" stroke-width="0.8"/></svg>
<div class="t" style="left:248px;top:307px;font-size:8.8px;color:#111;transform:scaleX(0.909);transform-origin:0 50%;">消息</div>
<div class="a" style="left:193px;top:320px;width:652px;height:182.5px;background:#fff;border-top:1px solid #c9ccd2;border-left:1px solid #b9bcc4;border-bottom:1px solid #c9ccd2"></div>
<div class="a" style="left:833px;top:321px;width:12px;height:181.5px;background:#f3f3f4;border-right:1px solid #d0d2d7"></div>
<div class="a" style="left:838px;top:332.5px;width:1.3px;height:35px;background:#8a8a8a"></div>
<div class="a" style="left:214.5px;top:321px;width:1px;height:181px;background:#f4f4f6"></div>
<div class="a" style="left:265.5px;top:321px;width:1px;height:181px;background:#f4f4f6"></div>
<div class="a" style="left:289.5px;top:321px;width:1px;height:181px;background:#f4f4f6"></div>
<div class="a" style="left:318.5px;top:321px;width:1px;height:181px;background:#f4f4f6"></div>
<div class="a" style="left:369px;top:321px;width:1px;height:181px;background:#f4f4f6"></div>
<div class="a" style="left:403.5px;top:321px;width:1px;height:181px;background:#f4f4f6"></div>
<div class="a" style="left:426px;top:321px;width:1px;height:181px;background:#f4f4f6"></div>
<div class="a" style="left:450px;top:321px;width:1px;height:181px;background:#f4f4f6"></div>
<div class="a" style="left:478.5px;top:321px;width:1px;height:181px;background:#f4f4f6"></div>
<div class="a" style="left:194px;top:321px;width:642px;height:181px;overflow:hidden">
<div class="a" style="left:0px;top:12.2px;width:285px;height:1px;background:#f4f4f6"></div>
<div class="a" style="left:0px;top:24.59px;width:285px;height:1px;background:#f4f4f6"></div>
<div class="a" style="left:0px;top:36.98px;width:285px;height:1px;background:#f4f4f6"></div>
<div class="a" style="left:0px;top:49.37px;width:285px;height:1px;background:#f4f4f6"></div>
<div class="a" style="left:0px;top:61.76px;width:285px;height:1px;background:#f4f4f6"></div>
<div class="a" style="left:0px;top:74.15px;width:285px;height:1px;background:#f4f4f6"></div>
<div class="a" style="left:0px;top:86.54px;width:285px;height:1px;background:#f4f4f6"></div>
<div class="a" style="left:0px;top:98.93px;width:285px;height:1px;background:#f4f4f6"></div>
<div class="a" style="left:0px;top:111.32px;width:285px;height:1px;background:#f4f4f6"></div>
<div class="a" style="left:0px;top:123.71px;width:285px;height:1px;background:#f4f4f6"></div>
<div class="a" style="left:0px;top:136.1px;width:285px;height:1px;background:#f4f4f6"></div>
<div class="a" style="left:0px;top:148.49px;width:285px;height:1px;background:#f4f4f6"></div>
<div class="a" style="left:0px;top:160.88px;width:285px;height:1px;background:#f4f4f6"></div>
<div class="a" style="left:0px;top:173.27px;width:285px;height:1px;background:#f4f4f6"></div>
<div class="a" style="left:0px;top:185.66px;width:285px;height:1px;background:#f4f4f6"></div>
<div class="a" style="left:96.5px;top:12.5px;width:28px;height:12px;background:#fdfde3"></div>
<div class="a" style="left:21.5px;top:12px;width:49.5px;height:12.8px;background:#e4ebf5;border:1px dotted #7f8da6"></div>
<div class="t" style="left:23.5px;top:0.3px;font-size:8px;color:#333;transform:scaleX(1.007);transform-origin:0 50%;">sno</div>
<div class="t" style="left:74.5px;top:0.3px;font-size:8px;color:#333;transform:scaleX(1.007);transform-origin:0 50%;">cno</div>
<div class="t" style="left:100px;top:0.3px;font-size:8px;color:#333;transform:scaleX(0.879);transform-origin:0 50%;">grade</div>
<div class="t" style="left:128.5px;top:0.3px;font-size:8px;color:#333;transform:scaleX(1.007);transform-origin:0 50%;">sno</div>
<div class="t" style="left:178.6px;top:0.3px;font-size:8px;color:#333;transform:scaleX(0.874);transform-origin:0 50%;">sname</div>
<div class="t" style="left:212.5px;top:0.3px;font-size:8px;color:#333;transform:scaleX(0.912);transform-origin:0 50%;">ssex</div>
<div class="t" style="left:235.6px;top:0.3px;font-size:8px;color:#333;transform:scaleX(0.922);transform-origin:0 50%;">sage</div>
<div class="t" style="left:260.5px;top:0.3px;font-size:8px;color:#333;transform:scaleX(0.919);transform-origin:0 50%;">sdept</div>
<div class="t" style="left:4px;top:12.6px;font-size:8.6px;color:#333;transform:scaleX(0.800);transform-origin:0 50%;">1</div>
<div class="t" style="left:25.7px;top:12.6px;font-size:8.6px;color:#333;transform:scaleX(0.800);transform-origin:0 50%;">1204304102</div>
<div class="t" style="left:76px;top:12.6px;font-size:8.6px;color:#333;transform:scaleX(0.800);transform-origin:0 50%;">2101</div>
<div class="t" style="left:101.5px;top:12.6px;font-size:8.6px;color:#7d7a1a;transform:scaleX(0.800);transform-origin:0 50%;">NULL</div>
<div class="t" style="left:130.6px;top:12.6px;font-size:8.6px;color:#333;transform:scaleX(0.800);transform-origin:0 50%;">1204304102</div>
<div class="t" style="left:180.4px;top:12.6px;font-size:8px;color:#222;transform:scaleX(0.940);transform-origin:0 50%;">石文勇</div>
<div class="t" style="left:214px;top:12.6px;font-size:8px;color:#222;transform:scaleX(0.940);transform-origin:0 50%;">男</div>
<div class="t" style="left:238px;top:12.6px;font-size:8.6px;color:#333;transform:scaleX(0.800);transform-origin:0 50%;">19</div>
<div class="t" style="left:262px;top:12.6px;font-size:8.6px;color:#333;transform:scaleX(0.800);transform-origin:0 50%;">JD</div>
<div class="t" style="left:4px;top:24.99px;font-size:8.6px;color:#333;transform:scaleX(0.800);transform-origin:0 50%;">2</div>
<div class="t" style="left:25.7px;top:24.99px;font-size:8.6px;color:#333;transform:scaleX(0.800);transform-origin:0 50%;">1204304102</div>
<div class="t" style="left:76px;top:24.99px;font-size:8.6px;color:#333;transform:scaleX(0.800);transform-origin:0 50%;">2102</div>
<div class="t" style="left:101.5px;top:24.99px;font-size:8.6px;color:#333;transform:scaleX(0.800);transform-origin:0 50%;">92</div>
<div class="t" style="left:130.6px;top:24.99px;font-size:8.6px;color:#333;transform:scaleX(0.800);transform-origin:0 50%;">1204304102</div>
<div class="t" style="left:180.4px;top:24.99px;font-size:8px;color:#222;transform:scaleX(0.940);transform-origin:0 50%;">石文勇</div>
<div class="t" style="left:214px;top:24.99px;font-size:8px;color:#222;transform:scaleX(0.940);transform-origin:0 50%;">男</div>
<div class="t" style="left:238px;top:24.99px;font-size:8.6px;color:#333;transform:scaleX(0.800);transform-origin:0 50%;">19</div>
<div class="t" style="left:262px;top:24.99px;font-size:8.6px;color:#333;transform:scaleX(0.800);transform-origin:0 50%;">JD</div>
<div class="t" style="left:4px;top:37.38px;font-size:8.6px;color:#333;transform:scaleX(0.800);transform-origin:0 50%;">3</div>
<div class="t" style="left:25.7px;top:37.38px;font-size:8.6px;color:#333;transform:scaleX(0.800);transform-origin:0 50%;">1204304102</div>
<div class="t" style="left:76px;top:37.38px;font-size:8.6px;color:#333;transform:scaleX(0.800);transform-origin:0 50%;">2103</div>
<div class="t" style="left:101.5px;top:37.38px;font-size:8.6px;color:#333;transform:scaleX(0.800);transform-origin:0 50%;">65</div>
<div class="t" style="left:130.6px;top:37.38px;font-size:8.6px;color:#333;transform:scaleX(0.800);transform-origin:0 50%;">1204304102</div>
<div class="t" style="left:180.4px;top:37.38px;font-size:8px;color:#222;transform:scaleX(0.940);transform-origin:0 50%;">石文勇</div>
<div class="t" style="left:214px;top:37.38px;font-size:8px;color:#222;transform:scaleX(0.940);transform-origin:0 50%;">男</div>
<div class="t" style="left:238px;top:37.38px;font-size:8.6px;color:#333;transform:scaleX(0.800);transform-origin:0 50%;">19</div>
<div class="t" style="left:262px;top:37.38px;font-size:8.6px;color:#333;transform:scaleX(0.800);transform-origin:0 50%;">JD</div>
<div class="t" style="left:4px;top:49.77px;font-size:8.6px;color:#333;transform:scaleX(0.800);transform-origin:0 50%;">4</div>
<div class="t" style="left:25.7px;top:49.77px;font-size:8.6px;color:#333;transform:scaleX(0.800);transform-origin:0 50%;">1204304102</div>
<div class="t" style="left:76px;top:49.77px;font-size:8.6px;color:#333;transform:scaleX(0.800);transform-origin:0 50%;">2104</div>
<div class="t" style="left:101.5px;top:49.77px;font-size:8.6px;color:#333;transform:scaleX(0.800);transform-origin:0 50%;">75</div>
<div class="t" style="left:130.6px;top:49.77px;font-size:8.6px;color:#333;transform:scaleX(0.800);transform-origin:0 50%;">1204304102</div>
<div class="t" style="left:180.4px;top:49.77px;font-size:8px;color:#222;transform:scaleX(0.940);transform-origin:0 50%;">石文勇</div>
<div class="t" style="left:214px;top:49.77px;font-size:8px;color:#222;transform:scaleX(0.940);transform-origin:0 50%;">男</div>
<div class="t" style="left:238px;top:49.77px;font-size:8.6px;color:#333;transform:scaleX(0.800);transform-origin:0 50%;">19</div>
<div class="t" style="left:262px;top:49.77px;font-size:8.6px;color:#333;transform:scaleX(0.800);transform-origin:0 50%;">JD</div>
<div class="t" style="left:4px;top:62.16px;font-size:8.6px;color:#333;transform:scaleX(0.800);transform-origin:0 50%;">5</div>
<div class="t" style="left:25.7px;top:62.16px;font-size:8.6px;color:#333;transform:scaleX(0.800);transform-origin:0 50%;">1204304102</div>
<div class="t" style="left:76px;top:62.16px;font-size:8.6px;color:#333;transform:scaleX(0.800);transform-origin:0 50%;">2105</div>
<div class="t" style="left:101.5px;top:62.16px;font-size:8.6px;color:#333;transform:scaleX(0.800);transform-origin:0 50%;">80</div>
<div class="t" style="left:130.6px;top:62.16px;font-size:8.6px;color:#333;transform:scaleX(0.800);transform-origin:0 50%;">1204304102</div>
<div class="t" style="left:180.4px;top:62.16px;font-size:8px;color:#222;transform:scaleX(0.940);transform-origin:0 50%;">石文勇</div>
<div class="t" style="left:214px;top:62.16px;font-size:8px;color:#222;transform:scaleX(0.940);transform-origin:0 50%;">男</div>
<div class="t" style="left:238px;top:62.16px;font-size:8.6px;color:#333;transform:scaleX(0.800);transform-origin:0 50%;">19</div>
<div class="t" style="left:262px;top:62.16px;font-size:8.6px;color:#333;transform:scaleX(0.800);transform-origin:0 50%;">JD</div>
<div class="t" style="left:4px;top:74.55px;font-size:8.6px;color:#333;transform:scaleX(0.800);transform-origin:0 50%;">6</div>
<div class="t" style="left:25.7px;top:74.55px;font-size:8.6px;color:#333;transform:scaleX(0.800);transform-origin:0 50%;">1204304102</div>
<div class="t" style="left:76px;top:74.55px;font-size:8.6px;color:#333;transform:scaleX(0.800);transform-origin:0 50%;">2106</div>
<div class="t" style="left:101.5px;top:74.55px;font-size:8.6px;color:#333;transform:scaleX(0.800);transform-origin:0 50%;">62</div>
<div class="t" style="left:130.6px;top:74.55px;font-size:8.6px;color:#333;transform:scaleX(0.800);transform-origin:0 50%;">1204304102</div>
<div class="t" style="left:180.4px;top:74.55px;font-size:8px;color:#222;transform:scaleX(0.940);transform-origin:0 50%;">石文勇</div>
<div class="t" style="left:214px;top:74.55px;font-size:8px;color:#222;transform:scaleX(0.940);transform-origin:0 50%;">男</div>
<div class="t" style="left:238px;top:74.55px;font-size:8.6px;color:#333;transform:scaleX(0.800);transform-origin:0 50%;">19</div>
<div class="t" style="left:262px;top:74.55px;font-size:8.6px;color:#333;transform:scaleX(0.800);transform-origin:0 50%;">JD</div>
<div class="t" style="left:4px;top:86.94px;font-size:8.6px;color:#333;transform:scaleX(0.800);transform-origin:0 50%;">7</div>
<div class="t" style="left:25.7px;top:86.94px;font-size:8.6px;color:#333;transform:scaleX(0.800);transform-origin:0 50%;">1204304102</div>
<div class="t" style="left:76px;top:86.94px;font-size:8.6px;color:#333;transform:scaleX(0.800);transform-origin:0 50%;">2107</div>
<div class="t" style="left:101.5px;top:86.94px;font-size:8.6px;color:#333;transform:scaleX(0.800);transform-origin:0 50%;">85</div>
<div class="t" style="left:130.6px;top:86.94px;font-size:8.6px;color:#333;transform:scaleX(0.800);transform-origin:0 50%;">1204304102</div>
<div class="t" style="left:180.4px;top:86.94px;font-size:8px;color:#222;transform:scaleX(0.940);transform-origin:0 50%;">石文勇</div>
<div class="t" style="left:214px;top:86.94px;font-size:8px;color:#222;transform:scaleX(0.940);transform-origin:0 50%;">男</div>
<div class="t" style="left:238px;top:86.94px;font-size:8.6px;color:#333;transform:scaleX(0.800);transform-origin:0 50%;">19</div>
<div class="t" style="left:262px;top:86.94px;font-size:8.6px;color:#333;transform:scaleX(0.800);transform-origin:0 50%;">JD</div>
<div class="t" style="left:4px;top:99.33px;font-size:8.6px;color:#333;transform:scaleX(0.800);transform-origin:0 50%;">8</div>
<div class="t" style="left:25.7px;top:99.33px;font-size:8.6px;color:#333;transform:scaleX(0.800);transform-origin:0 50%;">1204304103</div>
<div class="t" style="left:76px;top:99.33px;font-size:8.6px;color:#333;transform:scaleX(0.800);transform-origin:0 50%;">2102</div>
<div class="t" style="left:101.5px;top:99.33px;font-size:8.6px;color:#333;transform:scaleX(0.800);transform-origin:0 50%;">85</div>
<div class="t" style="left:130.6px;top:99.33px;font-size:8.6px;color:#333;transform:scaleX(0.800);transform-origin:0 50%;">1204304103</div>
<div class="t" style="left:180.4px;top:99.33px;font-size:8px;color:#222;transform:scaleX(0.940);transform-origin:0 50%;">黄荣胜</div>
<div class="t" style="left:214px;top:99.33px;font-size:8px;color:#222;transform:scaleX(0.940);transform-origin:0 50%;">男</div>
<div class="t" style="left:238px;top:99.33px;font-size:8.6px;color:#333;transform:scaleX(0.800);transform-origin:0 50%;">19</div>
<div class="t" style="left:262px;top:99.33px;font-size:8.6px;color:#333;transform:scaleX(0.800);transform-origin:0 50%;">JD</div>
<div class="t" style="left:4px;top:111.72px;font-size:8.6px;color:#333;transform:scaleX(0.800);transform-origin:0 50%;">9</div>
<div class="t" style="left:25.7px;top:111.72px;font-size:8.6px;color:#333;transform:scaleX(0.800);transform-origin:0 50%;">1204304103</div>
<div class="t" style="left:76px;top:111.72px;font-size:8.6px;color:#333;transform:scaleX(0.800);transform-origin:0 50%;">2103</div>
<div class="t" style="left:101.5px;top:111.72px;font-size:8.6px;color:#333;transform:scaleX(0.800);transform-origin:0 50%;">92</div>
<div class="t" style="left:130.6px;top:111.72px;font-size:8.6px;color:#333;transform:scaleX(0.800);transform-origin:0 50%;">1204304103</div>
<div class="t" style="left:180.4px;top:111.72px;font-size:8px;color:#222;transform:scaleX(0.940);transform-origin:0 50%;">黄荣胜</div>
<div class="t" style="left:214px;top:111.72px;font-size:8px;color:#222;transform:scaleX(0.940);transform-origin:0 50%;">男</div>
<div class="t" style="left:238px;top:111.72px;font-size:8.6px;color:#333;transform:scaleX(0.800);transform-origin:0 50%;">19</div>
<div class="t" style="left:262px;top:111.72px;font-size:8.6px;color:#333;transform:scaleX(0.800);transform-origin:0 50%;">JD</div>
<div class="t" style="left:4px;top:124.11px;font-size:8.6px;color:#333;transform:scaleX(0.800);transform-origin:0 50%;">10</div>
<div class="t" style="left:25.7px;top:124.11px;font-size:8.6px;color:#333;transform:scaleX(0.800);transform-origin:0 50%;">1204304103</div>
<div class="t" style="left:76px;top:124.11px;font-size:8.6px;color:#333;transform:scaleX(0.800);transform-origin:0 50%;">2104</div>
<div class="t" style="left:101.5px;top:124.11px;font-size:8.6px;color:#333;transform:scaleX(0.800);transform-origin:0 50%;">65</div>
<div class="t" style="left:130.6px;top:124.11px;font-size:8.6px;color:#333;transform:scaleX(0.800);transform-origin:0 50%;">1204304103</div>
<div class="t" style="left:180.4px;top:124.11px;font-size:8px;color:#222;transform:scaleX(0.940);transform-origin:0 50%;">黄荣胜</div>
<div class="t" style="left:214px;top:124.11px;font-size:8px;color:#222;transform:scaleX(0.940);transform-origin:0 50%;">男</div>
<div class="t" style="left:238px;top:124.11px;font-size:8.6px;color:#333;transform:scaleX(0.800);transform-origin:0 50%;">19</div>
<div class="t" style="left:262px;top:124.11px;font-size:8.6px;color:#333;transform:scaleX(0.800);transform-origin:0 50%;">JD</div>
<div class="t" style="left:4px;top:136.5px;font-size:8.6px;color:#333;transform:scaleX(0.800);transform-origin:0 50%;">11</div>
<div class="t" style="left:25.7px;top:136.5px;font-size:8.6px;color:#333;transform:scaleX(0.800);transform-origin:0 50%;">1204304103</div>
<div class="t" style="left:76px;top:136.5px;font-size:8.6px;color:#333;transform:scaleX(0.800);transform-origin:0 50%;">2105</div>
<div class="t" style="left:101.5px;top:136.5px;font-size:8.6px;color:#333;transform:scaleX(0.800);transform-origin:0 50%;">75</div>
<div class="t" style="left:130.6px;top:136.5px;font-size:8.6px;color:#333;transform:scaleX(0.800);transform-origin:0 50%;">1204304103</div>
<div class="t" style="left:180.4px;top:136.5px;font-size:8px;color:#222;transform:scaleX(0.940);transform-origin:0 50%;">黄荣胜</div>
<div class="t" style="left:214px;top:136.5px;font-size:8px;color:#222;transform:scaleX(0.940);transform-origin:0 50%;">男</div>
<div class="t" style="left:238px;top:136.5px;font-size:8.6px;color:#333;transform:scaleX(0.800);transform-origin:0 50%;">19</div>
<div class="t" style="left:262px;top:136.5px;font-size:8.6px;color:#333;transform:scaleX(0.800);transform-origin:0 50%;">JD</div>
<div class="t" style="left:4px;top:148.89px;font-size:8.6px;color:#333;transform:scaleX(0.800);transform-origin:0 50%;">12</div>
<div class="t" style="left:25.7px;top:148.89px;font-size:8.6px;color:#333;transform:scaleX(0.800);transform-origin:0 50%;">1204304103</div>
<div class="t" style="left:76px;top:148.89px;font-size:8.6px;color:#333;transform:scaleX(0.800);transform-origin:0 50%;">2106</div>
<div class="t" style="left:101.5px;top:148.89px;font-size:8.6px;color:#333;transform:scaleX(0.800);transform-origin:0 50%;">65</div>
<div class="t" style="left:130.6px;top:148.89px;font-size:8.6px;color:#333;transform:scaleX(0.800);transform-origin:0 50%;">1204304103</div>
<div class="t" style="left:180.4px;top:148.89px;font-size:8px;color:#222;transform:scaleX(0.940);transform-origin:0 50%;">黄荣胜</div>
<div class="t" style="left:214px;top:148.89px;font-size:8px;color:#222;transform:scaleX(0.940);transform-origin:0 50%;">男</div>
<div class="t" style="left:238px;top:148.89px;font-size:8.6px;color:#333;transform:scaleX(0.800);transform-origin:0 50%;">19</div>
<div class="t" style="left:262px;top:148.89px;font-size:8.6px;color:#333;transform:scaleX(0.800);transform-origin:0 50%;">JD</div>
<div class="t" style="left:4px;top:161.28px;font-size:8.6px;color:#333;transform:scaleX(0.800);transform-origin:0 50%;">13</div>
<div class="t" style="left:25.7px;top:161.28px;font-size:8.6px;color:#333;transform:scaleX(0.800);transform-origin:0 50%;">1204304103</div>
<div class="t" style="left:76px;top:161.28px;font-size:8.6px;color:#333;transform:scaleX(0.800);transform-origin:0 50%;">2107</div>
<div class="t" style="left:101.5px;top:161.28px;font-size:8.6px;color:#333;transform:scaleX(0.800);transform-origin:0 50%;">62</div>
<div class="t" style="left:130.6px;top:161.28px;font-size:8.6px;color:#333;transform:scaleX(0.800);transform-origin:0 50%;">1204304103</div>
<div class="t" style="left:180.4px;top:161.28px;font-size:8px;color:#222;transform:scaleX(0.940);transform-origin:0 50%;">黄荣胜</div>
<div class="t" style="left:214px;top:161.28px;font-size:8px;color:#222;transform:scaleX(0.940);transform-origin:0 50%;">男</div>
<div class="t" style="left:238px;top:161.28px;font-size:8.6px;color:#333;transform:scaleX(0.800);transform-origin:0 50%;">19</div>
<div class="t" style="left:262px;top:161.28px;font-size:8.6px;color:#333;transform:scaleX(0.800);transform-origin:0 50%;">JD</div>
<div class="t" style="left:4px;top:173.67px;font-size:8.6px;color:#333;transform:scaleX(0.800);transform-origin:0 50%;">14</div>
<div class="t" style="left:25.7px;top:173.67px;font-size:8.6px;color:#333;transform:scaleX(0.800);transform-origin:0 50%;">1204304104</div>
<div class="t" style="left:76px;top:173.67px;font-size:8.6px;color:#333;transform:scaleX(0.800);transform-origin:0 50%;">2103</div>
<div class="t" style="left:101.5px;top:173.67px;font-size:8.6px;color:#333;transform:scaleX(0.800);transform-origin:0 50%;">92</div>
<div class="t" style="left:130.6px;top:173.67px;font-size:8.6px;color:#333;transform:scaleX(0.800);transform-origin:0 50%;">1204304104</div>
<div class="t" style="left:180.4px;top:173.67px;font-size:8px;color:#222;transform:scaleX(0.940);transform-origin:0 50%;">黄楚明</div>
<div class="t" style="left:214px;top:173.67px;font-size:8px;color:#222;transform:scaleX(0.940);transform-origin:0 50%;">女</div>
<div class="t" style="left:238px;top:173.67px;font-size:8.6px;color:#333;transform:scaleX(0.800);transform-origin:0 50%;">18</div>
<div class="t" style="left:262px;top:173.67px;font-size:8.6px;color:#333;transform:scaleX(0.800);transform-origin:0 50%;">JD</div>
</div>
<div class="a" style="left:851px;top:72px;width:149px;height:450px;background:#fff;border-left:1px solid #aab2c0"></div>
<div class="a" style="left:851px;top:72px;width:149px;height:15px;background:linear-gradient(#adbccf,#c3d0de)"></div>
<div class="t" style="left:854.6px;top:73.5px;font-size:8.8px;color:#1a1a1a;transform:scaleX(0.880);transform-origin:0 50%;">属性</div>
<svg class="a" style="left:962px;top:76px" width="8" height="6"><path d="M0.5 1L7.5 1L4 5.5Z" fill="#111"/></svg>
<svg class="a" style="left:976px;top:74px" width="8" height="11"><path d="M2 1H6V6H2ZM1 6.5H7M4 6.5V10" stroke="#222" stroke-width="1" fill="none"/></svg>
<svg class="a" style="left:990px;top:75px" width="10" height="10"><path d="M1.5 1.5L8.5 8.5M8.5 1.5L1.5 8.5" stroke="#111" stroke-width="1.7" fill="none"/></svg>
<div class="a" style="left:852px;top:87px;width:148px;height:17.5px;background:#fff;border-bottom:1px solid #e3e5ea"></div>
<div class="t" style="left:857.7px;top:91px;font-size:8.8px;color:#111;transform:scaleX(0.890);transform-origin:0 50%;">当前连接参数</div>
<svg class="a" style="left:995px;top:95px" width="5" height="3"><path d="M0 0L5 0L2.5 3Z" fill="#222"/></svg>
<div class="a" style="left:852px;top:104.5px;width:148px;height:17.5px;background:linear-gradient(#fcfcfd,#eef0f4)"></div>
<div class="a" style="left:852.7px;top:106.5px;width:15.5px;height:14.5px;background:#dce9f8;border:1px solid #5c9ad8;border-radius:1px"></div>
<div class="a" style="left:855.5px;top:110px;width:3px;height:3px;background:#4a6cb0"></div>
<div class="a" style="left:860px;top:110.5px;width:5px;height:1px;background:#8a92a6"></div>
<div class="a" style="left:860px;top:112px;width:5px;height:1px;background:#b9bfcc"></div>
<div class="a" style="left:855.5px;top:115px;width:3px;height:3px;background:#4a6cb0"></div>
<div class="a" style="left:860px;top:115.5px;width:5px;height:1px;background:#8a92a6"></div>
<div class="a" style="left:860px;top:117px;width:5px;height:1px;background:#b9bfcc"></div>
<div class="t" style="left:869.8px;top:107.5px;font-size:10.5px;color:#d23030;transform:scaleX(0.850);transform-origin:0 50%;">2</div>
<div class="a" style="left:877.3px;top:108.5px;width:1.4px;height:9px;background:#222"></div>
<svg class="a" style="left:875px;top:115.5px" width="6" height="4"><path d="M0.5 0L5.5 0L3 3.5Z" fill="#222"/></svg>
<div class="a" style="left:885px;top:108px;width:1px;height:11px;background:#c6c9cf"></div>
<div class="a" style="left:888.5px;top:108.5px;width:10.5px;height:10px;background:#d0d2d6;border-radius:1px;border:1px solid #c0c2c7"></div>
<div class="a" style="left:852px;top:122px;width:9px;height:259.77px;background:#f0ede1"></div>
<div class="a" style="left:852px;top:122px;width:148px;height:260.77px;overflow:hidden">
<div class="a" style="left:0px;top:0px;width:148px;height:12.37px;background:#f0ede1"></div>
<svg class="a" style="left:1px;top:4.985px" width="7" height="7"><rect x="0.5" y="0.5" width="5.5" height="5.5" fill="#fff" stroke="#555" stroke-width="0.9"/><path d="M1.8 3.25H4.7" stroke="#222" stroke-width="0.9"/></svg>
<div class="t" style="left:11.3px;top:2.485px;font-size:8.8px;font-weight:bold;color:#5a5a5a;transform:scaleX(0.880);transform-origin:0 50%;">聚合状态</div>
<div class="a" style="left:9px;top:24.24px;width:139px;height:1px;background:#f1efe6"></div>
<div class="t" style="left:11.6px;top:14.855px;font-size:8.8px;color:#6e6e6e;transform:scaleX(0.864);transform-origin:0 50%;">返回的行数</div>
<div class="t" style="left:76px;top:14.855px;font-size:8.8px;color:#6e6e6e;transform:scaleX(0.919);transform-origin:0 50%;">58</div>
<div class="a" style="left:9px;top:36.61px;width:139px;height:1px;background:#f1efe6"></div>
<div class="t" style="left:11.6px;top:27.225px;font-size:8.8px;color:#6e6e6e;transform:scaleX(0.881);transform-origin:0 50%;">结束时间</div>
<div class="t" style="left:76px;top:27.225px;font-size:8.8px;color:#6e6e6e;transform:scaleX(0.950);transform-origin:0 50%;">2022/10/14 14:48:5</div>
<div class="a" style="left:9px;top:48.98px;width:139px;height:1px;background:#f1efe6"></div>
<div class="t" style="left:11.6px;top:39.595px;font-size:8.8px;color:#6e6e6e;transform:scaleX(0.881);transform-origin:0 50%;">连接失败</div>
<div class="a" style="left:9px;top:61.35px;width:139px;height:1px;background:#f1efe6"></div>
<div class="t" style="left:11.6px;top:51.965px;font-size:8.8px;color:#6e6e6e;transform:scaleX(0.880);transform-origin:0 50%;">名称</div>
<div class="t" style="left:76px;top:51.965px;font-size:8.8px;color:#6e6e6e;transform:scaleX(0.911);transform-origin:0 50%;">DESKTOP-NBME2IK</div>
<div class="a" style="left:9px;top:73.72px;width:139px;height:1px;background:#f1efe6"></div>
<div class="t" style="left:11.6px;top:64.335px;font-size:8.8px;color:#6e6e6e;transform:scaleX(0.881);transform-origin:0 50%;">启动时间</div>
<div class="t" style="left:76px;top:64.335px;font-size:8.8px;color:#6e6e6e;transform:scaleX(0.950);transform-origin:0 50%;">2022/10/14 14:48:5</div>
<div class="a" style="left:9px;top:86.09px;width:139px;height:1px;background:#f1efe6"></div>
<div class="t" style="left:11.6px;top:76.705px;font-size:8.8px;color:#6e6e6e;transform:scaleX(0.881);transform-origin:0 50%;">占用时间</div>
<div class="t" style="left:76px;top:76.705px;font-size:8.8px;color:#6e6e6e;transform:scaleX(0.915);transform-origin:0 50%;">00:00:00.074</div>
<div class="a" style="left:9px;top:98.46px;width:139px;height:1px;background:#f1efe6"></div>
<div class="t" style="left:11.6px;top:89.075px;font-size:8.8px;color:#6e6e6e;transform:scaleX(0.880);transform-origin:0 50%;">状态</div>
<div class="t" style="left:76px;top:89.075px;font-size:8.8px;color:#6e6e6e;transform:scaleX(0.880);transform-origin:0 50%;">打开</div>
<div class="a" style="left:0px;top:98.96px;width:148px;height:12.37px;background:#f0ede1"></div>
<svg class="a" style="left:1px;top:103.945px" width="7" height="7"><rect x="0.5" y="0.5" width="5.5" height="5.5" fill="#fff" stroke="#555" stroke-width="0.9"/><path d="M1.8 3.25H4.7" stroke="#222" stroke-width="0.9"/></svg>
<div class="t" style="left:11.3px;top:101.445px;font-size:8.8px;font-weight:bold;color:#5a5a5a;transform:scaleX(0.880);transform-origin:0 50%;">连接</div>
<div class="a" style="left:9px;top:123.2px;width:139px;height:1px;background:#f1efe6"></div>
<div class="t" style="left:11.6px;top:113.815px;font-size:8.8px;color:#111;transform:scaleX(0.881);transform-origin:0 50%;">连接名称</div>
<div class="t" style="left:76px;top:113.815px;font-size:8.8px;color:#111;transform:scaleX(0.911);transform-origin:0 50%;">DESKTOP-NBME2IK</div>
<div class="a" style="left:0px;top:123.7px;width:148px;height:12.37px;background:#f0ede1"></div>
<svg class="a" style="left:1px;top:128.685px" width="7" height="7"><rect x="0.5" y="0.5" width="5.5" height="5.5" fill="#fff" stroke="#555" stroke-width="0.9"/><path d="M1.8 3.25H4.7" stroke="#222" stroke-width="0.9"/></svg>
<div class="t" style="left:11.3px;top:126.185px;font-size:8.8px;font-weight:bold;color:#5a5a5a;transform:scaleX(0.880);transform-origin:0 50%;">连接详细信息</div>
<div class="a" style="left:9px;top:147.94px;width:139px;height:1px;background:#f1efe6"></div>
<div class="t" style="left:11.6px;top:138.555px;font-size:8.8px;color:#6e6e6e;transform:scaleX(0.730);transform-origin:0 50%;">SPID</div>
<div class="t" style="left:76px;top:138.555px;font-size:8.8px;color:#6e6e6e;transform:scaleX(0.919);transform-origin:0 50%;">55</div>
<div class="a" style="left:9px;top:160.31px;width:139px;height:1px;background:#f1efe6"></div>
<div class="t" style="left:11.6px;top:150.925px;font-size:8.8px;color:#6e6e6e;transform:scaleX(0.871);transform-origin:0 50%;">登录名</div>
<div class="t" style="left:76px;top:150.925px;font-size:8.8px;color:#6e6e6e;transform:scaleX(0.911);transform-origin:0 50%;">DESKTOP-NBME2IK</div>
<div class="a" style="left:9px;top:172.68px;width:139px;height:1px;background:#f1efe6"></div>
<div class="t" style="left:11.6px;top:163.295px;font-size:8.8px;color:#6e6e6e;transform:scaleX(0.877);transform-origin:0 50%;">返回的连接行数</div>
<div class="t" style="left:76px;top:163.295px;font-size:8.8px;color:#6e6e6e;transform:scaleX(0.919);transform-origin:0 50%;">58</div>
<div class="a" style="left:9px;top:185.05px;width:139px;height:1px;background:#f1efe6"></div>
<div class="t" style="left:11.6px;top:175.665px;font-size:8.8px;color:#6e6e6e;transform:scaleX(0.864);transform-origin:0 50%;">服务器版本</div>
<div class="t" style="left:76px;top:175.665px;font-size:8.8px;color:#6e6e6e;transform:scaleX(0.920);transform-origin:0 50%;">10.0.1600</div>
<div class="a" style="left:9px;top:197.42px;width:139px;height:1px;background:#f1efe6"></div>
<div class="t" style="left:11.6px;top:188.035px;font-size:8.8px;color:#6e6e6e;transform:scaleX(0.864);transform-origin:0 50%;">服务器名称</div>
<div class="t" style="left:76px;top:188.035px;font-size:8.8px;color:#6e6e6e;transform:scaleX(0.911);transform-origin:0 50%;">DESKTOP-NBME2IK</div>
<div class="a" style="left:9px;top:209.79px;width:139px;height:1px;background:#f1efe6"></div>
<div class="t" style="left:11.6px;top:200.405px;font-size:8.8px;color:#6e6e6e;transform:scaleX(0.871);transform-origin:0 50%;">连接结束时间</div>
<div class="t" style="left:76px;top:200.405px;font-size:8.8px;color:#6e6e6e;transform:scaleX(0.950);transform-origin:0 50%;">2022/10/14 14:48:5</div>
<div class="a" style="left:9px;top:222.16px;width:139px;height:1px;background:#f1efe6"></div>
<div class="t" style="left:11.6px;top:212.775px;font-size:8.8px;color:#6e6e6e;transform:scaleX(0.871);transform-origin:0 50%;">连接开始时间</div>
<div class="t" style="left:76px;top:212.775px;font-size:8.8px;color:#6e6e6e;transform:scaleX(0.950);transform-origin:0 50%;">2022/10/14 14:48:5</div>
<div class="a" style="left:9px;top:234.53px;width:139px;height:1px;background:#f1efe6"></div>
<div class="t" style="left:11.6px;top:225.145px;font-size:8.8px;color:#6e6e6e;transform:scaleX(0.871);transform-origin:0 50%;">连接占用时间</div>
<div class="t" style="left:76px;top:225.145px;font-size:8.8px;color:#6e6e6e;transform:scaleX(0.915);transform-origin:0 50%;">00:00:00.074</div>
<div class="a" style="left:9px;top:246.9px;width:139px;height:1px;background:#f1efe6"></div>
<div class="t" style="left:11.6px;top:237.515px;font-size:8.8px;color:#6e6e6e;transform:scaleX(0.881);transform-origin:0 50%;">连接状态</div>
<div class="t" style="left:76px;top:237.515px;font-size:8.8px;color:#6e6e6e;transform:scaleX(0.880);transform-origin:0 50%;">打开</div>
<div class="a" style="left:9px;top:259.27px;width:139px;height:1px;background:#f1efe6"></div>
<div class="t" style="left:11.6px;top:249.885px;font-size:8.8px;color:#6e6e6e;transform:scaleX(0.881);transform-origin:0 50%;">显示名称</div>
<div class="t" style="left:76px;top:249.885px;font-size:8.8px;color:#6e6e6e;transform:scaleX(0.911);transform-origin:0 50%;">DESKTOP-NBME2IK</div>
<div class="a" style="left:71.5px;top:0px;width:1px;height:259.77px;background:#f1efe6"></div>
</div>
<div class="a" style="left:852px;top:480px;width:148px;height:3px;background:#f0f0f0;border-top:1px solid #c9ccd2"></div>
<div class="a" style="left:852px;top:483px;width:148px;height:38.7px;background:#f0f0f0;border-top:1px solid #a9acb4;border-bottom:1px solid #a4a6ab"></div>
<div class="t" style="left:856px;top:485px;font-size:8.8px;font-weight:bold;color:#111;transform:scaleX(0.909);transform-origin:0 50%;">名称</div>
<div class="t" style="left:856px;top:496.8px;font-size:8.8px;color:#111;transform:scaleX(0.796);transform-origin:0 50%;">连接的名称。</div>
<div class="a" style="left:860px;top:407px;width:101.5px;height:17.5px;background:#fff;border:1px solid #e1e6f0;border-radius:2px"></div>
<svg class="a" style="left:845.5px;top:404px" width="21" height="21"><g transform="rotate(-13 10.5 10.5)"><path d="M3 3.5Q10 1.5 18 3.5Q19.5 10.5 18 17.5Q10 19.5 3 17.5Q1.5 10.5 3 3.5Z" fill="#f0641e"/><text x="10.5" y="16" font-family="Liberation Sans,sans-serif" font-size="15.5" font-weight="bold" fill="#fff" text-anchor="middle">S</text></g></svg>
<div class="t" style="left:870px;top:410px;font-size:10.5px;font-weight:bold;color:#1f6fd6;">英</div>
<div class="a" style="left:889px;top:413px;width:2px;height:2px;background:#1f6fd6;border-radius:1px"></div>
<div class="a" style="left:893px;top:416px;width:2px;height:2.5px;background:#1f6fd6;border-radius:1px"></div>
<div class="a" style="left:892.7px;top:418px;width:1.2px;height:2px;background:#1f6fd6"></div>
<svg class="a" style="left:901px;top:410px" width="9" height="13"><rect x="2.7" y="0.5" width="3.6" height="7" rx="1.8" fill="#1f6fd6"/><path d="M1 6Q1 9.5 4.5 9.5Q8 9.5 8 6M4.5 9.5V12" stroke="#1f6fd6" stroke-width="1.2" fill="none"/></svg>
<svg class="a" style="left:916px;top:411px" width="12" height="10"><rect x="0.7" y="0.7" width="10.6" height="8.6" rx="1" fill="none" stroke="#1f6fd6" stroke-width="1.4"/><path d="M2.5 3.3H9.5M2.5 5.2H9.5M3.5 7H8.5" stroke="#1f6fd6" stroke-width="1"/></svg>
<svg class="a" style="left:931px;top:411px" width="12" height="10"><path d="M3.5 0.5L0.3 3L2 5L3.3 4.2V9.5H8.7V4.2L10 5L11.7 3L8.5 0.5Q6 2.5 3.5 0.5Z" fill="#1f6fd6"/></svg>
<div class="a" style="left:948px;top:411px;width:4px;height:4px;background:#1f6fd6;border-radius:1px"></div>
<div class="a" style="left:948px;top:416px;width:4px;height:4px;background:#1f6fd6;border-radius:1px"></div>
<div class="a" style="left:953px;top:411px;width:4px;height:4px;background:#1f6fd6;border-radius:1px"></div>
<div class="a" style="left:953px;top:416px;width:4px;height:4px;background:#1f6fd6;border-radius:1px"></div>
<div class="a" style="left:191px;top:505px;width:657px;height:16px;background:#f1e78d;border-top:1px solid #ddd38a"></div>
<svg class="a" style="left:192.5px;top:507px" width="11" height="11"><circle cx="5.5" cy="5.5" r="5" fill="#34a545" stroke="#1f7f32" stroke-width="0.7"/><path d="M2.8 5.6L4.8 7.7L8.3 3.4" stroke="#fff" stroke-width="1.5" fill="none"/></svg>
<div class="t" style="left:206px;top:507px;font-size:8.8px;color:#222;transform:scaleX(0.810);transform-origin:0 50%;">查询已成功执行。</div>
<div class="a" style="left:495px;top:507px;width:1px;height:12px;background:#a9a37a"></div>
<div class="a" style="left:623px;top:507px;width:1px;height:12px;background:#a9a37a"></div>
<div class="a" style="left:741px;top:507px;width:1px;height:12px;background:#a9a37a"></div>
<div class="a" style="left:769px;top:507px;width:1px;height:12px;background:#a9a37a"></div>
<div class="a" style="left:810px;top:507px;width:1px;height:12px;background:#a9a37a"></div>
<div class="t" style="left:499.5px;top:507px;font-size:8.8px;color:#222;transform:scaleX(0.899);transform-origin:0 50%;">DESKTOP-NBME2IK (10.0 RTM)</div>
<div class="t" style="left:627px;top:507px;font-size:8.8px;color:#222;transform:scaleX(0.907);transform-origin:0 50%;">DESKTOP-NBME2IK\20774 ...</div>
<div class="t" style="left:747px;top:507px;font-size:8.8px;color:#222;transform:scaleX(0.800);transform-origin:0 50%;">XSCJ</div>
<div class="t" style="left:775px;top:507px;font-size:8.8px;color:#222;transform:scaleX(0.905);transform-origin:0 50%;">00:00:00</div>
<div class="t" style="left:816px;top:507px;font-size:8.8px;color:#222;transform:scaleX(0.903);transform-origin:0 50%;">58 行</div>
<div class="a" style="left:0px;top:522px;width:1000px;height:15px;background:#f0f0f0"></div>
<div class="t" style="left:7px;top:523.5px;font-size:8.8px;color:#222;transform:scaleX(0.880);transform-origin:0 50%;">就绪</div>
<div class="t" style="left:763px;top:523.5px;font-size:8.8px;color:#222;transform:scaleX(0.903);transform-origin:0 50%;">行 44</div>
<div class="t" style="left:822px;top:523.5px;font-size:8.8px;color:#222;transform:scaleX(0.867);transform-origin:0 50%;">列 1</div>
<div class="t" style="left:888px;top:523.5px;font-size:8.8px;color:#222;transform:scaleX(0.914);transform-origin:0 50%;">Ch 1</div>
<div class="t" style="left:984px;top:524px;font-size:8.8px;color:#222;transform:scaleX(1.021);transform-origin:0 50%;">Ins</div>
<div class="t" style="left:930px;top:519px;font-size:9.5px;color:#9a9a9a;transform:scaleX(0.945);transform-origin:0 50%;">CSDN @长月</div>
</body></html>
